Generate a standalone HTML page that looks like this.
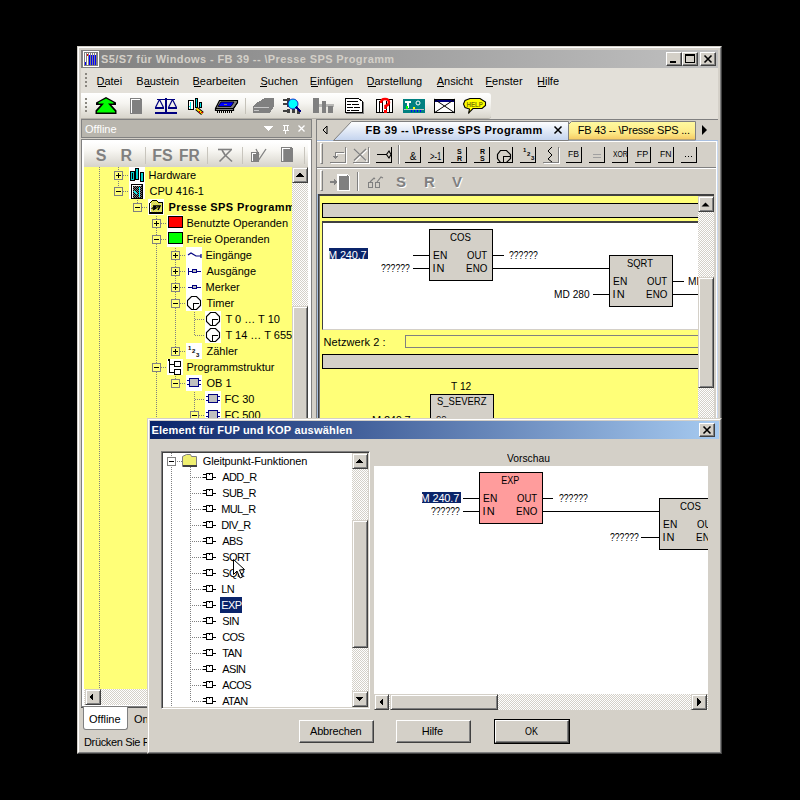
<!DOCTYPE html>
<html><head><meta charset="utf-8">
<style>
*{margin:0;padding:0;box-sizing:border-box}
html,body{width:800px;height:800px;background:#000;overflow:hidden;font-family:"Liberation Sans",sans-serif;font-size:11px;color:#000}
.a{position:absolute}
.t{position:absolute;white-space:nowrap;line-height:13px}
.btn3{position:absolute;background:#d4d0c8;border-top:1px solid #fff;border-left:1px solid #fff;border-right:1px solid #404040;border-bottom:1px solid #404040;box-shadow:inset -1px -1px 0 #808080}
.sbtn{position:absolute;background:#d4d0c8;border-top:1px solid #d4d0c8;border-left:1px solid #d4d0c8;border-right:1px solid #404040;border-bottom:1px solid #404040;box-shadow:inset 1px 1px 0 #fff,inset -1px -1px 0 #808080}
.sunk{position:absolute;border-top:1px solid #808080;border-left:1px solid #808080;border-right:1px solid #fff;border-bottom:1px solid #fff;box-shadow:inset 1px 1px 0 #404040, inset -1px -1px 0 #d4d0c8}
.chk{position:absolute;background:repeating-conic-gradient(#d4d0c8 0 25%,#fff 0 50%) 0 0/2px 2px}
</style></head><body>
<!-- ============ MAIN WINDOW ============ -->
<div class="a" style="left:77px;top:46px;width:645px;height:708px;background:#d4d0c8;border-top:1px solid #d4d0c8;border-left:1px solid #d4d0c8;border-right:1px solid #404040;border-bottom:1px solid #404040"></div>
<div class="a" style="left:78px;top:47px;width:643px;height:706px;border-top:1px solid #fff;border-left:1px solid #fff;border-right:1px solid #808080;border-bottom:1px solid #808080"></div>
<div class="a" style="left:81px;top:50px;width:637px;height:18px;background:linear-gradient(to right,#808080,#c0c0c0)"></div>
<div class="btn3" style="left:666px;top:52px;width:16px;height:14px"></div>
<div class="btn3" style="left:682px;top:52px;width:16px;height:14px"></div>
<div class="btn3" style="left:700px;top:52px;width:16px;height:14px"></div>
<div class="a" style="left:81px;top:68px;width:637px;height:51px;background:#e3e0d9"></div>
<div class="a" style="left:81px;top:93px;width:410px;height:25px;border-radius:0 3px 3px 0;background:linear-gradient(to bottom,#fff 0%,#f6f5f1 40%,#d8d5cc 100%);box-shadow:0 1px 0 #b5b2aa"></div>

<div class="t" style="left:101.00px;top:53px;font-weight:bold;color:#d4d0c8;letter-spacing:0.39px;">S5/S7 für Windows - FB 39 -- \Presse SPS Programm</div>
<div class="t" style="left:96.50px;top:75px;">Datei</div>
<div class="a" style="left:98px;top:86px;width:8px;height:1px;background:#000"></div>
<div class="t" style="left:136.30px;top:75px;">Baustein</div>
<div class="a" style="left:145px;top:86px;width:6px;height:1px;background:#000"></div>
<div class="t" style="left:192.50px;top:75px;">Bearbeiten</div>
<div class="a" style="left:194px;top:86px;width:7px;height:1px;background:#000"></div>
<div class="t" style="left:260.50px;top:75px;">Suchen</div>
<div class="a" style="left:260px;top:86px;width:7px;height:1px;background:#000"></div>
<div class="t" style="left:309.80px;top:75px;">Einfügen</div>
<div class="a" style="left:311px;top:86px;width:7px;height:1px;background:#000"></div>
<div class="t" style="left:366.50px;top:75px;">Darstellung</div>
<div class="a" style="left:368px;top:86px;width:8px;height:1px;background:#000"></div>
<div class="t" style="left:436.70px;top:75px;">Ansicht</div>
<div class="a" style="left:437px;top:86px;width:7px;height:1px;background:#000"></div>
<div class="t" style="left:485.30px;top:75px;">Fenster</div>
<div class="a" style="left:486px;top:86px;width:7px;height:1px;background:#000"></div>
<div class="t" style="left:537.00px;top:75px;">Hilfe</div>
<div class="a" style="left:538px;top:86px;width:8px;height:1px;background:#000"></div>
<!-- ICONS LAYER 1 -->
<svg class="a" style="left:0;top:0" width="800" height="800" shape-rendering="crispEdges">
<!-- title icon -->
<rect x="83" y="51" width="16" height="16" fill="#fff"/>
<rect x="84" y="52" width="14" height="14" fill="#808080"/>
<rect x="85" y="53" width="1" height="12" fill="#fff"/><rect x="85" y="62" width="1" height="3" fill="#0000ff"/>
<rect x="87" y="53" width="1" height="12" fill="#fff"/><rect x="87" y="54" width="1" height="2" fill="#f00"/>
<rect x="89" y="55" width="1" height="10" fill="#00f"/><rect x="91" y="55" width="1" height="10" fill="#00f"/>
<rect x="93" y="55" width="1" height="10" fill="#00f"/><rect x="95" y="55" width="1" height="10" fill="#00f"/>
<rect x="89" y="53" width="1" height="2" fill="#fff"/><rect x="91" y="53" width="1" height="2" fill="#fff"/>
<rect x="93" y="53" width="1" height="2" fill="#fff"/><rect x="95" y="53" width="1" height="2" fill="#fff"/>
<!-- title buttons glyphs -->
<rect x="670" y="61" width="6" height="2" fill="#000"/>
<rect x="685" y="54" width="9" height="8" fill="none" stroke="#000" stroke-width="1" transform="translate(0.5,0.5)"/>
<rect x="685" y="54" width="9" height="2" fill="#000"/>
<path d="M704.5,55.5 L711.5,62.5 M711.5,55.5 L704.5,62.5" stroke="#000" stroke-width="1.6" shape-rendering="auto"/>
<!-- menu grip -->
<g fill="#8a8780"><rect x="85" y="73" width="2" height="2"/><rect x="85" y="77" width="2" height="2"/><rect x="85" y="81" width="2" height="2"/><rect x="85" y="85" width="2" height="2"/></g>
<!-- toolbar grip -->
<g fill="#8a8780"><rect x="85" y="98" width="2" height="2"/><rect x="85" y="102" width="2" height="2"/><rect x="85" y="106" width="2" height="2"/><rect x="85" y="110" width="2" height="2"/></g>
<!-- tb1 green arrow -->
<path d="M106,97 L116,102.5 L116,105 L111.5,105 L116.5,110.5 L116.5,114 L95.5,114 L95.5,110.5 L100.5,105 L96,105 L96,102.5 Z" fill="#000" shape-rendering="auto"/><path d="M106,98.5 L113.5,102.5 L113.5,103.5 L108,103.5 L115,111.5 L115,112.5 L97,112.5 L97,111.5 L104,103.5 L98.5,103.5 L98.5,102.5 Z" fill="#00ff00" shape-rendering="auto"/>
<!-- tb2 gray book -->
<rect x="130" y="98" width="12" height="16" fill="#808080"/>
<rect x="131" y="99" width="1" height="14" fill="#fff"/><rect x="131" y="99" width="9" height="1" fill="#fff"/><rect x="141" y="98" width="1" height="1" fill="#e8e6e0"/>
<!-- tb3 scales -->
<g fill="#000080">
<rect x="165" y="98" width="2" height="15"/><rect x="155" y="112" width="22" height="2"/>
<rect x="157" y="99" width="18" height="1"/>
<rect x="155" y="107" width="9" height="2"/><rect x="168" y="107" width="9" height="2"/>
</g>
<path d="M159.5,99.5 L155.5,107.5 M159.5,99.5 L163.5,107.5 M172.5,99.5 L168.5,107.5 M172.5,99.5 L176.5,107.5" stroke="#000080" stroke-width="1.2" shape-rendering="auto"/>
<!-- tb4 hardware -->
<rect x="188" y="100" width="6" height="10" fill="#000"/><rect x="189" y="101" width="4" height="8" fill="#fff"/><rect x="190" y="102" width="1" height="7" fill="#00e0e0"/><rect x="189" y="106" width="2" height="1" fill="#00e0e0"/>
<rect x="195" y="98" width="3" height="10" fill="#000"/><rect x="196" y="99" width="1" height="8" fill="#00e0e0"/>
<rect x="199" y="102" width="3" height="6" fill="#000"/><rect x="200" y="103" width="1" height="4" fill="#00e0e0"/>
<path d="M196.5,108.5 L202.5,113.5" stroke="#000" stroke-width="4" shape-rendering="auto"/>
<path d="M196.5,108.5 L202.5,113.5" stroke="#ffe000" stroke-width="2.2" shape-rendering="auto"/>
<rect x="199" y="111" width="1" height="2" fill="#e00000"/><rect x="201" y="112" width="2" height="1" fill="#e00000"/>
<!-- tb5 chip -->
<path d="M219.5,100.5 L237.5,100.5 L237.5,102.5 L233.5,108.5 L233.5,110.5 L215.5,110.5 L215.5,108.5 Z" fill="#808080" stroke="#000" stroke-width="1.2" shape-rendering="auto"/>
<path d="M215.5,108.5 L233.5,108.5 L237.5,102.5" fill="none" stroke="#000" stroke-width="1" shape-rendering="auto"/>
<path d="M221,102 L234,102 L231,106.5 L218,106.5 Z" fill="#0000ff" stroke="#000" stroke-width="0.8" shape-rendering="auto"/>
<rect x="224" y="104" width="3" height="1" fill="#808060"/>
<g fill="#000"><rect x="217" y="111" width="1" height="2"/><rect x="219" y="111" width="1" height="2"/><rect x="221" y="111" width="1" height="2"/><rect x="223" y="111" width="1" height="2"/><rect x="225" y="111" width="1" height="2"/><rect x="227" y="111" width="1" height="2"/><rect x="229" y="111" width="1" height="2"/><rect x="231" y="111" width="1" height="2"/></g>
<!-- sep -->
<rect x="245" y="98" width="1" height="16" fill="#c5c2b9"/>
<!-- tb7 gray printer -->
<path d="M258,102 L265,98 L274,98 L274,106 L270,113 L253,113 L253,106 Z" fill="#808080"/>
<rect x="254" y="107" width="15" height="1" fill="#c8c8c8"/><rect x="254" y="110" width="5" height="1" fill="#c8c8c8"/>
<!-- tb8 network -->
<g fill="#404040"><rect x="283" y="99" width="4" height="2"/><rect x="283" y="103" width="4" height="2"/><rect x="283" y="110" width="4" height="2"/><rect x="287" y="98" width="3" height="9"/><rect x="287" y="109" width="3" height="4"/><rect x="292" y="109" width="3" height="4"/><rect x="297" y="109" width="3" height="5"/></g>
<circle cx="293" cy="104" r="5" fill="#00ffff" stroke="#0000c0" stroke-width="0.8" shape-rendering="auto"/>
<path d="M296,107 L301,112" stroke="#000080" stroke-width="1.5"/>
<!-- tb9 gray blocks -->
<g fill="#808080"><rect x="313" y="98" width="6" height="15"/><rect x="322" y="101" width="4" height="12"/><rect x="328" y="106" width="5" height="7"/><rect x="313" y="104" width="21" height="3" opacity="0.5"/></g>
<!-- tb10 document -->
<path d="M345,98 L359,98 L363,101 L363,113 L345,113 Z" fill="#808080" transform="translate(1,1)"/>
<path d="M345,98 L358,98 L362,101 L362,112 L345,112 Z" fill="#fff" stroke="#000" stroke-width="1" transform="translate(0.5,0.5)"/>
<g fill="#000"><rect x="347" y="101" width="11" height="1"/><rect x="347" y="104" width="4" height="1"/><rect x="352" y="104" width="7" height="1"/><rect x="347" y="107" width="6" height="1"/><rect x="354" y="107" width="6" height="1"/><rect x="347" y="110" width="3" height="1"/><rect x="351" y="110" width="8" height="1"/></g>
<!-- tb11 red ? -->
<rect x="376.5" y="99.5" width="16" height="13" fill="#fff" stroke="#000" stroke-width="1"/>
<g fill="#000"><rect x="379" y="101" width="1" height="11"/><rect x="382" y="101" width="1" height="11"/><rect x="386" y="101" width="1" height="11"/><rect x="389" y="101" width="1" height="11"/></g>
<path d="M381,103 Q381,99 385,99 Q389,99 389,102.5 Q389,105 385.5,106 L385.5,109" fill="none" stroke="#f00" stroke-width="2.5" shape-rendering="auto"/>
<rect x="384" y="110" width="3" height="3" fill="#f00"/>
<!-- tb12 teal -->
<rect x="403" y="99" width="22" height="14" fill="#008080"/>
<g fill="#fff"><rect x="405" y="101" width="6" height="2"/><rect x="407" y="103" width="2" height="5"/><rect x="404" y="109" width="20" height="1" fill="#c0c0c0"/></g>
<rect x="406" y="106" width="2" height="3" fill="#00ff00"/><rect x="413" y="107" width="2" height="2" fill="#ffff00"/>
<circle cx="418" cy="103" r="2" fill="none" stroke="#fff" stroke-width="1" shape-rendering="auto"/>
<g fill="#0000ff"><rect x="411" y="110" width="1" height="2"/><rect x="414" y="110" width="1" height="2"/><rect x="417" y="110" width="1" height="2"/><rect x="420" y="110" width="1" height="2"/></g>
<!-- tb13 envelope -->
<rect x="434.5" y="99.5" width="20" height="13" fill="#fff" stroke="#000" stroke-width="1"/>
<rect x="435" y="100" width="19" height="2" fill="#000080"/>
<path d="M434,99 L455,113 M455,99 L434,113" stroke="#000" stroke-width="1" shape-rendering="auto"/>
<!-- tb14 HELP -->
<path d="M470,98.5 L480,98.5 L485.5,102 L485.5,105.5 L482,108.5 L473,108.5 L470.5,111 L468.5,113.5 L469.5,109 L465,107.5 L463.5,104 L465,100.5 Z" fill="#ffff00" stroke="#000" stroke-width="1.1" shape-rendering="auto"/>
<text x="466.5" y="107" font-family="Liberation Sans" font-size="7" font-weight="bold" fill="#808000" textLength="16.5" lengthAdjust="spacingAndGlyphs">HELP</text>
</svg>
<!-- ============ LEFT DOCK PANEL ============ -->
<div class="a" style="left:81px;top:119px;width:231px;height:19px;background:#b8b5ad;border:1px solid #808080;border-right:1px solid #808080"></div>
<div class="t" style="left:85.00px;top:123px;color:#fff;">Offline</div>
<div class="a" style="left:81px;top:139px;width:231px;height:568px;background:#fff;border:1px solid #808080"></div>
<div class="a" style="left:84px;top:142px;width:224px;height:25px;background:linear-gradient(to bottom,#fff 0%,#f7f6f2 35%,#d6d3ca 100%)"></div>
<div class="a" style="left:84px;top:167px;width:208px;height:522px;background:#ffff78"></div>
<div class="chk" style="left:292px;top:167px;width:16px;height:522px"></div>
<div class="sbtn" style="left:292px;top:167px;width:16px;height:16px"></div>
<div class="sbtn" style="left:292px;top:306px;width:16px;height:383px"></div>
<div class="chk" style="left:84px;top:689px;width:224px;height:16px"></div>
<div class="sbtn" style="left:85px;top:689px;width:16px;height:16px"></div>
<div class="a" style="left:81px;top:707px;width:66px;height:1px;background:#505050"></div>
<div class="a" style="left:83px;top:707px;width:45px;height:23px;background:#fff;border:1px solid #808080;border-top:none;border-radius:0 0 3px 3px"></div>
<div class="t" style="left:89.00px;top:713px;">Offline</div>
<div class="t" style="left:134.00px;top:713px;">Online</div>
<div class="t" style="left:84.00px;top:736px;letter-spacing:-0.35px;">Drücken Sie F1, um Hilfe zu erhalten.</div>
<svg class="a" style="left:0;top:0" width="800" height="800" shape-rendering="crispEdges">
<defs><clipPath id="tc"><rect x="84" y="167" width="208" height="522"/></clipPath><pattern id="dk" width="2" height="2" patternUnits="userSpaceOnUse"><rect width="2" height="2" fill="#000"/><rect width="1" height="1" fill="#808080"/><rect x="1" y="1" width="1" height="1" fill="#808080"/></pattern><pattern id="yl" width="2" height="2" patternUnits="userSpaceOnUse"><rect width="2" height="2" fill="#ffff00"/><rect width="1" height="1" fill="#c0c0c0"/><rect x="1" y="1" width="1" height="1" fill="#c0c0c0"/></pattern></defs>
<g clip-path="url(#tc)">
<rect x="99" y="167" width="1" height="1" fill="#808080"/>
<rect x="99" y="169" width="1" height="1" fill="#808080"/>
<rect x="99" y="171" width="1" height="1" fill="#808080"/>
<rect x="99" y="173" width="1" height="1" fill="#808080"/>
<rect x="99" y="175" width="1" height="1" fill="#808080"/>
<rect x="99" y="177" width="1" height="1" fill="#808080"/>
<rect x="99" y="179" width="1" height="1" fill="#808080"/>
<rect x="99" y="181" width="1" height="1" fill="#808080"/>
<rect x="99" y="183" width="1" height="1" fill="#808080"/>
<rect x="99" y="185" width="1" height="1" fill="#808080"/>
<rect x="99" y="187" width="1" height="1" fill="#808080"/>
<rect x="99" y="189" width="1" height="1" fill="#808080"/>
<rect x="99" y="191" width="1" height="1" fill="#808080"/>
<rect x="99" y="193" width="1" height="1" fill="#808080"/>
<rect x="99" y="195" width="1" height="1" fill="#808080"/>
<rect x="99" y="197" width="1" height="1" fill="#808080"/>
<rect x="99" y="199" width="1" height="1" fill="#808080"/>
<rect x="99" y="201" width="1" height="1" fill="#808080"/>
<rect x="99" y="203" width="1" height="1" fill="#808080"/>
<rect x="99" y="205" width="1" height="1" fill="#808080"/>
<rect x="99" y="207" width="1" height="1" fill="#808080"/>
<rect x="99" y="209" width="1" height="1" fill="#808080"/>
<rect x="99" y="211" width="1" height="1" fill="#808080"/>
<rect x="99" y="213" width="1" height="1" fill="#808080"/>
<rect x="99" y="215" width="1" height="1" fill="#808080"/>
<rect x="99" y="217" width="1" height="1" fill="#808080"/>
<rect x="99" y="219" width="1" height="1" fill="#808080"/>
<rect x="99" y="221" width="1" height="1" fill="#808080"/>
<rect x="99" y="223" width="1" height="1" fill="#808080"/>
<rect x="99" y="225" width="1" height="1" fill="#808080"/>
<rect x="99" y="227" width="1" height="1" fill="#808080"/>
<rect x="99" y="229" width="1" height="1" fill="#808080"/>
<rect x="99" y="231" width="1" height="1" fill="#808080"/>
<rect x="99" y="233" width="1" height="1" fill="#808080"/>
<rect x="99" y="235" width="1" height="1" fill="#808080"/>
<rect x="99" y="237" width="1" height="1" fill="#808080"/>
<rect x="99" y="239" width="1" height="1" fill="#808080"/>
<rect x="99" y="241" width="1" height="1" fill="#808080"/>
<rect x="99" y="243" width="1" height="1" fill="#808080"/>
<rect x="99" y="245" width="1" height="1" fill="#808080"/>
<rect x="99" y="247" width="1" height="1" fill="#808080"/>
<rect x="99" y="249" width="1" height="1" fill="#808080"/>
<rect x="99" y="251" width="1" height="1" fill="#808080"/>
<rect x="99" y="253" width="1" height="1" fill="#808080"/>
<rect x="99" y="255" width="1" height="1" fill="#808080"/>
<rect x="99" y="257" width="1" height="1" fill="#808080"/>
<rect x="99" y="259" width="1" height="1" fill="#808080"/>
<rect x="99" y="261" width="1" height="1" fill="#808080"/>
<rect x="99" y="263" width="1" height="1" fill="#808080"/>
<rect x="99" y="265" width="1" height="1" fill="#808080"/>
<rect x="99" y="267" width="1" height="1" fill="#808080"/>
<rect x="99" y="269" width="1" height="1" fill="#808080"/>
<rect x="99" y="271" width="1" height="1" fill="#808080"/>
<rect x="99" y="273" width="1" height="1" fill="#808080"/>
<rect x="99" y="275" width="1" height="1" fill="#808080"/>
<rect x="99" y="277" width="1" height="1" fill="#808080"/>
<rect x="99" y="279" width="1" height="1" fill="#808080"/>
<rect x="99" y="281" width="1" height="1" fill="#808080"/>
<rect x="99" y="283" width="1" height="1" fill="#808080"/>
<rect x="99" y="285" width="1" height="1" fill="#808080"/>
<rect x="99" y="287" width="1" height="1" fill="#808080"/>
<rect x="99" y="289" width="1" height="1" fill="#808080"/>
<rect x="99" y="291" width="1" height="1" fill="#808080"/>
<rect x="99" y="293" width="1" height="1" fill="#808080"/>
<rect x="99" y="295" width="1" height="1" fill="#808080"/>
<rect x="99" y="297" width="1" height="1" fill="#808080"/>
<rect x="99" y="299" width="1" height="1" fill="#808080"/>
<rect x="99" y="301" width="1" height="1" fill="#808080"/>
<rect x="99" y="303" width="1" height="1" fill="#808080"/>
<rect x="99" y="305" width="1" height="1" fill="#808080"/>
<rect x="99" y="307" width="1" height="1" fill="#808080"/>
<rect x="99" y="309" width="1" height="1" fill="#808080"/>
<rect x="99" y="311" width="1" height="1" fill="#808080"/>
<rect x="99" y="313" width="1" height="1" fill="#808080"/>
<rect x="99" y="315" width="1" height="1" fill="#808080"/>
<rect x="99" y="317" width="1" height="1" fill="#808080"/>
<rect x="99" y="319" width="1" height="1" fill="#808080"/>
<rect x="99" y="321" width="1" height="1" fill="#808080"/>
<rect x="99" y="323" width="1" height="1" fill="#808080"/>
<rect x="99" y="325" width="1" height="1" fill="#808080"/>
<rect x="99" y="327" width="1" height="1" fill="#808080"/>
<rect x="99" y="329" width="1" height="1" fill="#808080"/>
<rect x="99" y="331" width="1" height="1" fill="#808080"/>
<rect x="99" y="333" width="1" height="1" fill="#808080"/>
<rect x="99" y="335" width="1" height="1" fill="#808080"/>
<rect x="99" y="337" width="1" height="1" fill="#808080"/>
<rect x="99" y="339" width="1" height="1" fill="#808080"/>
<rect x="99" y="341" width="1" height="1" fill="#808080"/>
<rect x="99" y="343" width="1" height="1" fill="#808080"/>
<rect x="99" y="345" width="1" height="1" fill="#808080"/>
<rect x="99" y="347" width="1" height="1" fill="#808080"/>
<rect x="99" y="349" width="1" height="1" fill="#808080"/>
<rect x="99" y="351" width="1" height="1" fill="#808080"/>
<rect x="99" y="353" width="1" height="1" fill="#808080"/>
<rect x="99" y="355" width="1" height="1" fill="#808080"/>
<rect x="99" y="357" width="1" height="1" fill="#808080"/>
<rect x="99" y="359" width="1" height="1" fill="#808080"/>
<rect x="99" y="361" width="1" height="1" fill="#808080"/>
<rect x="99" y="363" width="1" height="1" fill="#808080"/>
<rect x="99" y="365" width="1" height="1" fill="#808080"/>
<rect x="99" y="367" width="1" height="1" fill="#808080"/>
<rect x="99" y="369" width="1" height="1" fill="#808080"/>
<rect x="99" y="371" width="1" height="1" fill="#808080"/>
<rect x="99" y="373" width="1" height="1" fill="#808080"/>
<rect x="99" y="375" width="1" height="1" fill="#808080"/>
<rect x="99" y="377" width="1" height="1" fill="#808080"/>
<rect x="99" y="379" width="1" height="1" fill="#808080"/>
<rect x="99" y="381" width="1" height="1" fill="#808080"/>
<rect x="99" y="383" width="1" height="1" fill="#808080"/>
<rect x="99" y="385" width="1" height="1" fill="#808080"/>
<rect x="99" y="387" width="1" height="1" fill="#808080"/>
<rect x="99" y="389" width="1" height="1" fill="#808080"/>
<rect x="99" y="391" width="1" height="1" fill="#808080"/>
<rect x="99" y="393" width="1" height="1" fill="#808080"/>
<rect x="99" y="395" width="1" height="1" fill="#808080"/>
<rect x="99" y="397" width="1" height="1" fill="#808080"/>
<rect x="99" y="399" width="1" height="1" fill="#808080"/>
<rect x="99" y="401" width="1" height="1" fill="#808080"/>
<rect x="99" y="403" width="1" height="1" fill="#808080"/>
<rect x="99" y="405" width="1" height="1" fill="#808080"/>
<rect x="99" y="407" width="1" height="1" fill="#808080"/>
<rect x="99" y="409" width="1" height="1" fill="#808080"/>
<rect x="99" y="411" width="1" height="1" fill="#808080"/>
<rect x="99" y="413" width="1" height="1" fill="#808080"/>
<rect x="99" y="415" width="1" height="1" fill="#808080"/>
<rect x="99" y="417" width="1" height="1" fill="#808080"/>
<rect x="99" y="419" width="1" height="1" fill="#808080"/>
<rect x="99" y="421" width="1" height="1" fill="#808080"/>
<rect x="99" y="423" width="1" height="1" fill="#808080"/>
<rect x="99" y="425" width="1" height="1" fill="#808080"/>
<rect x="99" y="427" width="1" height="1" fill="#808080"/>
<rect x="99" y="429" width="1" height="1" fill="#808080"/>
<rect x="99" y="431" width="1" height="1" fill="#808080"/>
<rect x="99" y="433" width="1" height="1" fill="#808080"/>
<rect x="99" y="435" width="1" height="1" fill="#808080"/>
<rect x="99" y="437" width="1" height="1" fill="#808080"/>
<rect x="99" y="439" width="1" height="1" fill="#808080"/>
<rect x="99" y="441" width="1" height="1" fill="#808080"/>
<rect x="99" y="443" width="1" height="1" fill="#808080"/>
<rect x="99" y="445" width="1" height="1" fill="#808080"/>
<rect x="99" y="447" width="1" height="1" fill="#808080"/>
<rect x="99" y="449" width="1" height="1" fill="#808080"/>
<rect x="99" y="451" width="1" height="1" fill="#808080"/>
<rect x="99" y="453" width="1" height="1" fill="#808080"/>
<rect x="99" y="455" width="1" height="1" fill="#808080"/>
<rect x="99" y="457" width="1" height="1" fill="#808080"/>
<rect x="99" y="459" width="1" height="1" fill="#808080"/>
<rect x="99" y="461" width="1" height="1" fill="#808080"/>
<rect x="99" y="463" width="1" height="1" fill="#808080"/>
<rect x="99" y="465" width="1" height="1" fill="#808080"/>
<rect x="99" y="467" width="1" height="1" fill="#808080"/>
<rect x="99" y="469" width="1" height="1" fill="#808080"/>
<rect x="99" y="471" width="1" height="1" fill="#808080"/>
<rect x="99" y="473" width="1" height="1" fill="#808080"/>
<rect x="99" y="475" width="1" height="1" fill="#808080"/>
<rect x="99" y="477" width="1" height="1" fill="#808080"/>
<rect x="99" y="479" width="1" height="1" fill="#808080"/>
<rect x="99" y="481" width="1" height="1" fill="#808080"/>
<rect x="99" y="483" width="1" height="1" fill="#808080"/>
<rect x="99" y="485" width="1" height="1" fill="#808080"/>
<rect x="99" y="487" width="1" height="1" fill="#808080"/>
<rect x="99" y="489" width="1" height="1" fill="#808080"/>
<rect x="99" y="491" width="1" height="1" fill="#808080"/>
<rect x="99" y="493" width="1" height="1" fill="#808080"/>
<rect x="99" y="495" width="1" height="1" fill="#808080"/>
<rect x="99" y="497" width="1" height="1" fill="#808080"/>
<rect x="99" y="499" width="1" height="1" fill="#808080"/>
<rect x="99" y="501" width="1" height="1" fill="#808080"/>
<rect x="99" y="503" width="1" height="1" fill="#808080"/>
<rect x="99" y="505" width="1" height="1" fill="#808080"/>
<rect x="99" y="507" width="1" height="1" fill="#808080"/>
<rect x="99" y="509" width="1" height="1" fill="#808080"/>
<rect x="99" y="511" width="1" height="1" fill="#808080"/>
<rect x="99" y="513" width="1" height="1" fill="#808080"/>
<rect x="99" y="515" width="1" height="1" fill="#808080"/>
<rect x="99" y="517" width="1" height="1" fill="#808080"/>
<rect x="99" y="519" width="1" height="1" fill="#808080"/>
<rect x="99" y="521" width="1" height="1" fill="#808080"/>
<rect x="99" y="523" width="1" height="1" fill="#808080"/>
<rect x="99" y="525" width="1" height="1" fill="#808080"/>
<rect x="99" y="527" width="1" height="1" fill="#808080"/>
<rect x="99" y="529" width="1" height="1" fill="#808080"/>
<rect x="99" y="531" width="1" height="1" fill="#808080"/>
<rect x="99" y="533" width="1" height="1" fill="#808080"/>
<rect x="99" y="535" width="1" height="1" fill="#808080"/>
<rect x="99" y="537" width="1" height="1" fill="#808080"/>
<rect x="99" y="539" width="1" height="1" fill="#808080"/>
<rect x="99" y="541" width="1" height="1" fill="#808080"/>
<rect x="99" y="543" width="1" height="1" fill="#808080"/>
<rect x="99" y="545" width="1" height="1" fill="#808080"/>
<rect x="99" y="547" width="1" height="1" fill="#808080"/>
<rect x="99" y="549" width="1" height="1" fill="#808080"/>
<rect x="99" y="551" width="1" height="1" fill="#808080"/>
<rect x="99" y="553" width="1" height="1" fill="#808080"/>
<rect x="99" y="555" width="1" height="1" fill="#808080"/>
<rect x="99" y="557" width="1" height="1" fill="#808080"/>
<rect x="99" y="559" width="1" height="1" fill="#808080"/>
<rect x="99" y="561" width="1" height="1" fill="#808080"/>
<rect x="99" y="563" width="1" height="1" fill="#808080"/>
<rect x="99" y="565" width="1" height="1" fill="#808080"/>
<rect x="99" y="567" width="1" height="1" fill="#808080"/>
<rect x="99" y="569" width="1" height="1" fill="#808080"/>
<rect x="99" y="571" width="1" height="1" fill="#808080"/>
<rect x="99" y="573" width="1" height="1" fill="#808080"/>
<rect x="99" y="575" width="1" height="1" fill="#808080"/>
<rect x="99" y="577" width="1" height="1" fill="#808080"/>
<rect x="99" y="579" width="1" height="1" fill="#808080"/>
<rect x="99" y="581" width="1" height="1" fill="#808080"/>
<rect x="99" y="583" width="1" height="1" fill="#808080"/>
<rect x="99" y="585" width="1" height="1" fill="#808080"/>
<rect x="99" y="587" width="1" height="1" fill="#808080"/>
<rect x="99" y="589" width="1" height="1" fill="#808080"/>
<rect x="99" y="591" width="1" height="1" fill="#808080"/>
<rect x="99" y="593" width="1" height="1" fill="#808080"/>
<rect x="99" y="595" width="1" height="1" fill="#808080"/>
<rect x="99" y="597" width="1" height="1" fill="#808080"/>
<rect x="99" y="599" width="1" height="1" fill="#808080"/>
<rect x="99" y="601" width="1" height="1" fill="#808080"/>
<rect x="99" y="603" width="1" height="1" fill="#808080"/>
<rect x="99" y="605" width="1" height="1" fill="#808080"/>
<rect x="99" y="607" width="1" height="1" fill="#808080"/>
<rect x="99" y="609" width="1" height="1" fill="#808080"/>
<rect x="99" y="611" width="1" height="1" fill="#808080"/>
<rect x="99" y="613" width="1" height="1" fill="#808080"/>
<rect x="99" y="615" width="1" height="1" fill="#808080"/>
<rect x="99" y="617" width="1" height="1" fill="#808080"/>
<rect x="99" y="619" width="1" height="1" fill="#808080"/>
<rect x="99" y="621" width="1" height="1" fill="#808080"/>
<rect x="99" y="623" width="1" height="1" fill="#808080"/>
<rect x="99" y="625" width="1" height="1" fill="#808080"/>
<rect x="99" y="627" width="1" height="1" fill="#808080"/>
<rect x="99" y="629" width="1" height="1" fill="#808080"/>
<rect x="99" y="631" width="1" height="1" fill="#808080"/>
<rect x="99" y="633" width="1" height="1" fill="#808080"/>
<rect x="99" y="635" width="1" height="1" fill="#808080"/>
<rect x="99" y="637" width="1" height="1" fill="#808080"/>
<rect x="99" y="639" width="1" height="1" fill="#808080"/>
<rect x="99" y="641" width="1" height="1" fill="#808080"/>
<rect x="99" y="643" width="1" height="1" fill="#808080"/>
<rect x="99" y="645" width="1" height="1" fill="#808080"/>
<rect x="99" y="647" width="1" height="1" fill="#808080"/>
<rect x="99" y="649" width="1" height="1" fill="#808080"/>
<rect x="99" y="651" width="1" height="1" fill="#808080"/>
<rect x="99" y="653" width="1" height="1" fill="#808080"/>
<rect x="99" y="655" width="1" height="1" fill="#808080"/>
<rect x="99" y="657" width="1" height="1" fill="#808080"/>
<rect x="99" y="659" width="1" height="1" fill="#808080"/>
<rect x="99" y="661" width="1" height="1" fill="#808080"/>
<rect x="99" y="663" width="1" height="1" fill="#808080"/>
<rect x="99" y="665" width="1" height="1" fill="#808080"/>
<rect x="99" y="667" width="1" height="1" fill="#808080"/>
<rect x="99" y="669" width="1" height="1" fill="#808080"/>
<rect x="99" y="671" width="1" height="1" fill="#808080"/>
<rect x="99" y="673" width="1" height="1" fill="#808080"/>
<rect x="99" y="675" width="1" height="1" fill="#808080"/>
<rect x="99" y="677" width="1" height="1" fill="#808080"/>
<rect x="99" y="679" width="1" height="1" fill="#808080"/>
<rect x="99" y="681" width="1" height="1" fill="#808080"/>
<rect x="99" y="683" width="1" height="1" fill="#808080"/>
<rect x="99" y="685" width="1" height="1" fill="#808080"/>
<rect x="99" y="687" width="1" height="1" fill="#808080"/>
<rect x="118" y="167" width="1" height="1" fill="#808080"/>
<rect x="118" y="169" width="1" height="1" fill="#808080"/>
<rect x="118" y="171" width="1" height="1" fill="#808080"/>
<rect x="118" y="173" width="1" height="1" fill="#808080"/>
<rect x="118" y="175" width="1" height="1" fill="#808080"/>
<rect x="118" y="177" width="1" height="1" fill="#808080"/>
<rect x="118" y="179" width="1" height="1" fill="#808080"/>
<rect x="118" y="181" width="1" height="1" fill="#808080"/>
<rect x="118" y="183" width="1" height="1" fill="#808080"/>
<rect x="118" y="185" width="1" height="1" fill="#808080"/>
<rect x="118" y="187" width="1" height="1" fill="#808080"/>
<rect x="118" y="189" width="1" height="1" fill="#808080"/>
<rect x="137" y="196" width="1" height="1" fill="#808080"/>
<rect x="137" y="198" width="1" height="1" fill="#808080"/>
<rect x="137" y="200" width="1" height="1" fill="#808080"/>
<rect x="137" y="202" width="1" height="1" fill="#808080"/>
<rect x="137" y="204" width="1" height="1" fill="#808080"/>
<rect x="137" y="206" width="1" height="1" fill="#808080"/>
<rect x="156" y="212" width="1" height="1" fill="#808080"/>
<rect x="156" y="214" width="1" height="1" fill="#808080"/>
<rect x="156" y="216" width="1" height="1" fill="#808080"/>
<rect x="156" y="218" width="1" height="1" fill="#808080"/>
<rect x="156" y="220" width="1" height="1" fill="#808080"/>
<rect x="156" y="222" width="1" height="1" fill="#808080"/>
<rect x="156" y="224" width="1" height="1" fill="#808080"/>
<rect x="156" y="226" width="1" height="1" fill="#808080"/>
<rect x="156" y="228" width="1" height="1" fill="#808080"/>
<rect x="156" y="230" width="1" height="1" fill="#808080"/>
<rect x="156" y="232" width="1" height="1" fill="#808080"/>
<rect x="156" y="234" width="1" height="1" fill="#808080"/>
<rect x="156" y="236" width="1" height="1" fill="#808080"/>
<rect x="156" y="238" width="1" height="1" fill="#808080"/>
<rect x="156" y="240" width="1" height="1" fill="#808080"/>
<rect x="156" y="242" width="1" height="1" fill="#808080"/>
<rect x="156" y="244" width="1" height="1" fill="#808080"/>
<rect x="156" y="246" width="1" height="1" fill="#808080"/>
<rect x="156" y="248" width="1" height="1" fill="#808080"/>
<rect x="156" y="250" width="1" height="1" fill="#808080"/>
<rect x="156" y="252" width="1" height="1" fill="#808080"/>
<rect x="156" y="254" width="1" height="1" fill="#808080"/>
<rect x="156" y="256" width="1" height="1" fill="#808080"/>
<rect x="156" y="258" width="1" height="1" fill="#808080"/>
<rect x="156" y="260" width="1" height="1" fill="#808080"/>
<rect x="156" y="262" width="1" height="1" fill="#808080"/>
<rect x="156" y="264" width="1" height="1" fill="#808080"/>
<rect x="156" y="266" width="1" height="1" fill="#808080"/>
<rect x="156" y="268" width="1" height="1" fill="#808080"/>
<rect x="156" y="270" width="1" height="1" fill="#808080"/>
<rect x="156" y="272" width="1" height="1" fill="#808080"/>
<rect x="156" y="274" width="1" height="1" fill="#808080"/>
<rect x="156" y="276" width="1" height="1" fill="#808080"/>
<rect x="156" y="278" width="1" height="1" fill="#808080"/>
<rect x="156" y="280" width="1" height="1" fill="#808080"/>
<rect x="156" y="282" width="1" height="1" fill="#808080"/>
<rect x="156" y="284" width="1" height="1" fill="#808080"/>
<rect x="156" y="286" width="1" height="1" fill="#808080"/>
<rect x="156" y="288" width="1" height="1" fill="#808080"/>
<rect x="156" y="290" width="1" height="1" fill="#808080"/>
<rect x="156" y="292" width="1" height="1" fill="#808080"/>
<rect x="156" y="294" width="1" height="1" fill="#808080"/>
<rect x="156" y="296" width="1" height="1" fill="#808080"/>
<rect x="156" y="298" width="1" height="1" fill="#808080"/>
<rect x="156" y="300" width="1" height="1" fill="#808080"/>
<rect x="156" y="302" width="1" height="1" fill="#808080"/>
<rect x="156" y="304" width="1" height="1" fill="#808080"/>
<rect x="156" y="306" width="1" height="1" fill="#808080"/>
<rect x="156" y="308" width="1" height="1" fill="#808080"/>
<rect x="156" y="310" width="1" height="1" fill="#808080"/>
<rect x="156" y="312" width="1" height="1" fill="#808080"/>
<rect x="156" y="314" width="1" height="1" fill="#808080"/>
<rect x="156" y="316" width="1" height="1" fill="#808080"/>
<rect x="156" y="318" width="1" height="1" fill="#808080"/>
<rect x="156" y="320" width="1" height="1" fill="#808080"/>
<rect x="156" y="322" width="1" height="1" fill="#808080"/>
<rect x="156" y="324" width="1" height="1" fill="#808080"/>
<rect x="156" y="326" width="1" height="1" fill="#808080"/>
<rect x="156" y="328" width="1" height="1" fill="#808080"/>
<rect x="156" y="330" width="1" height="1" fill="#808080"/>
<rect x="156" y="332" width="1" height="1" fill="#808080"/>
<rect x="156" y="334" width="1" height="1" fill="#808080"/>
<rect x="156" y="336" width="1" height="1" fill="#808080"/>
<rect x="156" y="338" width="1" height="1" fill="#808080"/>
<rect x="156" y="340" width="1" height="1" fill="#808080"/>
<rect x="156" y="342" width="1" height="1" fill="#808080"/>
<rect x="156" y="344" width="1" height="1" fill="#808080"/>
<rect x="156" y="346" width="1" height="1" fill="#808080"/>
<rect x="156" y="348" width="1" height="1" fill="#808080"/>
<rect x="156" y="350" width="1" height="1" fill="#808080"/>
<rect x="156" y="352" width="1" height="1" fill="#808080"/>
<rect x="156" y="354" width="1" height="1" fill="#808080"/>
<rect x="156" y="356" width="1" height="1" fill="#808080"/>
<rect x="156" y="358" width="1" height="1" fill="#808080"/>
<rect x="156" y="360" width="1" height="1" fill="#808080"/>
<rect x="156" y="362" width="1" height="1" fill="#808080"/>
<rect x="156" y="364" width="1" height="1" fill="#808080"/>
<rect x="156" y="366" width="1" height="1" fill="#808080"/>
<rect x="156" y="368" width="1" height="1" fill="#808080"/>
<rect x="156" y="370" width="1" height="1" fill="#808080"/>
<rect x="156" y="372" width="1" height="1" fill="#808080"/>
<rect x="156" y="374" width="1" height="1" fill="#808080"/>
<rect x="156" y="376" width="1" height="1" fill="#808080"/>
<rect x="156" y="378" width="1" height="1" fill="#808080"/>
<rect x="156" y="380" width="1" height="1" fill="#808080"/>
<rect x="156" y="382" width="1" height="1" fill="#808080"/>
<rect x="156" y="384" width="1" height="1" fill="#808080"/>
<rect x="156" y="386" width="1" height="1" fill="#808080"/>
<rect x="156" y="388" width="1" height="1" fill="#808080"/>
<rect x="156" y="390" width="1" height="1" fill="#808080"/>
<rect x="156" y="392" width="1" height="1" fill="#808080"/>
<rect x="156" y="394" width="1" height="1" fill="#808080"/>
<rect x="156" y="396" width="1" height="1" fill="#808080"/>
<rect x="156" y="398" width="1" height="1" fill="#808080"/>
<rect x="156" y="400" width="1" height="1" fill="#808080"/>
<rect x="156" y="402" width="1" height="1" fill="#808080"/>
<rect x="156" y="404" width="1" height="1" fill="#808080"/>
<rect x="156" y="406" width="1" height="1" fill="#808080"/>
<rect x="156" y="408" width="1" height="1" fill="#808080"/>
<rect x="156" y="410" width="1" height="1" fill="#808080"/>
<rect x="156" y="412" width="1" height="1" fill="#808080"/>
<rect x="156" y="414" width="1" height="1" fill="#808080"/>
<rect x="156" y="416" width="1" height="1" fill="#808080"/>
<rect x="156" y="418" width="1" height="1" fill="#808080"/>
<rect x="156" y="420" width="1" height="1" fill="#808080"/>
<rect x="156" y="422" width="1" height="1" fill="#808080"/>
<rect x="156" y="424" width="1" height="1" fill="#808080"/>
<rect x="156" y="426" width="1" height="1" fill="#808080"/>
<rect x="156" y="428" width="1" height="1" fill="#808080"/>
<rect x="156" y="430" width="1" height="1" fill="#808080"/>
<rect x="156" y="432" width="1" height="1" fill="#808080"/>
<rect x="156" y="434" width="1" height="1" fill="#808080"/>
<rect x="156" y="436" width="1" height="1" fill="#808080"/>
<rect x="156" y="438" width="1" height="1" fill="#808080"/>
<rect x="156" y="440" width="1" height="1" fill="#808080"/>
<rect x="156" y="442" width="1" height="1" fill="#808080"/>
<rect x="156" y="444" width="1" height="1" fill="#808080"/>
<rect x="156" y="446" width="1" height="1" fill="#808080"/>
<rect x="156" y="448" width="1" height="1" fill="#808080"/>
<rect x="156" y="450" width="1" height="1" fill="#808080"/>
<rect x="156" y="452" width="1" height="1" fill="#808080"/>
<rect x="156" y="454" width="1" height="1" fill="#808080"/>
<rect x="156" y="456" width="1" height="1" fill="#808080"/>
<rect x="156" y="458" width="1" height="1" fill="#808080"/>
<rect x="156" y="460" width="1" height="1" fill="#808080"/>
<rect x="156" y="462" width="1" height="1" fill="#808080"/>
<rect x="156" y="464" width="1" height="1" fill="#808080"/>
<rect x="156" y="466" width="1" height="1" fill="#808080"/>
<rect x="156" y="468" width="1" height="1" fill="#808080"/>
<rect x="156" y="470" width="1" height="1" fill="#808080"/>
<rect x="156" y="472" width="1" height="1" fill="#808080"/>
<rect x="156" y="474" width="1" height="1" fill="#808080"/>
<rect x="156" y="476" width="1" height="1" fill="#808080"/>
<rect x="156" y="478" width="1" height="1" fill="#808080"/>
<rect x="156" y="480" width="1" height="1" fill="#808080"/>
<rect x="156" y="482" width="1" height="1" fill="#808080"/>
<rect x="156" y="484" width="1" height="1" fill="#808080"/>
<rect x="156" y="486" width="1" height="1" fill="#808080"/>
<rect x="156" y="488" width="1" height="1" fill="#808080"/>
<rect x="156" y="490" width="1" height="1" fill="#808080"/>
<rect x="156" y="492" width="1" height="1" fill="#808080"/>
<rect x="156" y="494" width="1" height="1" fill="#808080"/>
<rect x="156" y="496" width="1" height="1" fill="#808080"/>
<rect x="156" y="498" width="1" height="1" fill="#808080"/>
<rect x="156" y="500" width="1" height="1" fill="#808080"/>
<rect x="156" y="502" width="1" height="1" fill="#808080"/>
<rect x="156" y="504" width="1" height="1" fill="#808080"/>
<rect x="156" y="506" width="1" height="1" fill="#808080"/>
<rect x="156" y="508" width="1" height="1" fill="#808080"/>
<rect x="156" y="510" width="1" height="1" fill="#808080"/>
<rect x="156" y="512" width="1" height="1" fill="#808080"/>
<rect x="156" y="514" width="1" height="1" fill="#808080"/>
<rect x="156" y="516" width="1" height="1" fill="#808080"/>
<rect x="156" y="518" width="1" height="1" fill="#808080"/>
<rect x="156" y="520" width="1" height="1" fill="#808080"/>
<rect x="156" y="522" width="1" height="1" fill="#808080"/>
<rect x="156" y="524" width="1" height="1" fill="#808080"/>
<rect x="156" y="526" width="1" height="1" fill="#808080"/>
<rect x="156" y="528" width="1" height="1" fill="#808080"/>
<rect x="156" y="530" width="1" height="1" fill="#808080"/>
<rect x="156" y="532" width="1" height="1" fill="#808080"/>
<rect x="156" y="534" width="1" height="1" fill="#808080"/>
<rect x="156" y="536" width="1" height="1" fill="#808080"/>
<rect x="156" y="538" width="1" height="1" fill="#808080"/>
<rect x="156" y="540" width="1" height="1" fill="#808080"/>
<rect x="156" y="542" width="1" height="1" fill="#808080"/>
<rect x="156" y="544" width="1" height="1" fill="#808080"/>
<rect x="156" y="546" width="1" height="1" fill="#808080"/>
<rect x="156" y="548" width="1" height="1" fill="#808080"/>
<rect x="156" y="550" width="1" height="1" fill="#808080"/>
<rect x="156" y="552" width="1" height="1" fill="#808080"/>
<rect x="156" y="554" width="1" height="1" fill="#808080"/>
<rect x="156" y="556" width="1" height="1" fill="#808080"/>
<rect x="156" y="558" width="1" height="1" fill="#808080"/>
<rect x="156" y="560" width="1" height="1" fill="#808080"/>
<rect x="156" y="562" width="1" height="1" fill="#808080"/>
<rect x="156" y="564" width="1" height="1" fill="#808080"/>
<rect x="156" y="566" width="1" height="1" fill="#808080"/>
<rect x="156" y="568" width="1" height="1" fill="#808080"/>
<rect x="156" y="570" width="1" height="1" fill="#808080"/>
<rect x="156" y="572" width="1" height="1" fill="#808080"/>
<rect x="156" y="574" width="1" height="1" fill="#808080"/>
<rect x="156" y="576" width="1" height="1" fill="#808080"/>
<rect x="156" y="578" width="1" height="1" fill="#808080"/>
<rect x="156" y="580" width="1" height="1" fill="#808080"/>
<rect x="156" y="582" width="1" height="1" fill="#808080"/>
<rect x="156" y="584" width="1" height="1" fill="#808080"/>
<rect x="156" y="586" width="1" height="1" fill="#808080"/>
<rect x="156" y="588" width="1" height="1" fill="#808080"/>
<rect x="156" y="590" width="1" height="1" fill="#808080"/>
<rect x="156" y="592" width="1" height="1" fill="#808080"/>
<rect x="156" y="594" width="1" height="1" fill="#808080"/>
<rect x="156" y="596" width="1" height="1" fill="#808080"/>
<rect x="156" y="598" width="1" height="1" fill="#808080"/>
<rect x="156" y="600" width="1" height="1" fill="#808080"/>
<rect x="156" y="602" width="1" height="1" fill="#808080"/>
<rect x="156" y="604" width="1" height="1" fill="#808080"/>
<rect x="156" y="606" width="1" height="1" fill="#808080"/>
<rect x="156" y="608" width="1" height="1" fill="#808080"/>
<rect x="156" y="610" width="1" height="1" fill="#808080"/>
<rect x="156" y="612" width="1" height="1" fill="#808080"/>
<rect x="156" y="614" width="1" height="1" fill="#808080"/>
<rect x="156" y="616" width="1" height="1" fill="#808080"/>
<rect x="156" y="618" width="1" height="1" fill="#808080"/>
<rect x="156" y="620" width="1" height="1" fill="#808080"/>
<rect x="156" y="622" width="1" height="1" fill="#808080"/>
<rect x="156" y="624" width="1" height="1" fill="#808080"/>
<rect x="156" y="626" width="1" height="1" fill="#808080"/>
<rect x="156" y="628" width="1" height="1" fill="#808080"/>
<rect x="156" y="630" width="1" height="1" fill="#808080"/>
<rect x="156" y="632" width="1" height="1" fill="#808080"/>
<rect x="156" y="634" width="1" height="1" fill="#808080"/>
<rect x="156" y="636" width="1" height="1" fill="#808080"/>
<rect x="156" y="638" width="1" height="1" fill="#808080"/>
<rect x="156" y="640" width="1" height="1" fill="#808080"/>
<rect x="156" y="642" width="1" height="1" fill="#808080"/>
<rect x="156" y="644" width="1" height="1" fill="#808080"/>
<rect x="156" y="646" width="1" height="1" fill="#808080"/>
<rect x="156" y="648" width="1" height="1" fill="#808080"/>
<rect x="156" y="650" width="1" height="1" fill="#808080"/>
<rect x="156" y="652" width="1" height="1" fill="#808080"/>
<rect x="156" y="654" width="1" height="1" fill="#808080"/>
<rect x="156" y="656" width="1" height="1" fill="#808080"/>
<rect x="156" y="658" width="1" height="1" fill="#808080"/>
<rect x="156" y="660" width="1" height="1" fill="#808080"/>
<rect x="156" y="662" width="1" height="1" fill="#808080"/>
<rect x="156" y="664" width="1" height="1" fill="#808080"/>
<rect x="156" y="666" width="1" height="1" fill="#808080"/>
<rect x="156" y="668" width="1" height="1" fill="#808080"/>
<rect x="156" y="670" width="1" height="1" fill="#808080"/>
<rect x="156" y="672" width="1" height="1" fill="#808080"/>
<rect x="156" y="674" width="1" height="1" fill="#808080"/>
<rect x="156" y="676" width="1" height="1" fill="#808080"/>
<rect x="156" y="678" width="1" height="1" fill="#808080"/>
<rect x="156" y="680" width="1" height="1" fill="#808080"/>
<rect x="156" y="682" width="1" height="1" fill="#808080"/>
<rect x="156" y="684" width="1" height="1" fill="#808080"/>
<rect x="156" y="686" width="1" height="1" fill="#808080"/>
<rect x="175" y="244" width="1" height="1" fill="#808080"/>
<rect x="175" y="246" width="1" height="1" fill="#808080"/>
<rect x="175" y="248" width="1" height="1" fill="#808080"/>
<rect x="175" y="250" width="1" height="1" fill="#808080"/>
<rect x="175" y="252" width="1" height="1" fill="#808080"/>
<rect x="175" y="254" width="1" height="1" fill="#808080"/>
<rect x="175" y="256" width="1" height="1" fill="#808080"/>
<rect x="175" y="258" width="1" height="1" fill="#808080"/>
<rect x="175" y="260" width="1" height="1" fill="#808080"/>
<rect x="175" y="262" width="1" height="1" fill="#808080"/>
<rect x="175" y="264" width="1" height="1" fill="#808080"/>
<rect x="175" y="266" width="1" height="1" fill="#808080"/>
<rect x="175" y="268" width="1" height="1" fill="#808080"/>
<rect x="175" y="270" width="1" height="1" fill="#808080"/>
<rect x="175" y="272" width="1" height="1" fill="#808080"/>
<rect x="175" y="274" width="1" height="1" fill="#808080"/>
<rect x="175" y="276" width="1" height="1" fill="#808080"/>
<rect x="175" y="278" width="1" height="1" fill="#808080"/>
<rect x="175" y="280" width="1" height="1" fill="#808080"/>
<rect x="175" y="282" width="1" height="1" fill="#808080"/>
<rect x="175" y="284" width="1" height="1" fill="#808080"/>
<rect x="175" y="286" width="1" height="1" fill="#808080"/>
<rect x="175" y="288" width="1" height="1" fill="#808080"/>
<rect x="175" y="290" width="1" height="1" fill="#808080"/>
<rect x="175" y="292" width="1" height="1" fill="#808080"/>
<rect x="175" y="294" width="1" height="1" fill="#808080"/>
<rect x="175" y="296" width="1" height="1" fill="#808080"/>
<rect x="175" y="298" width="1" height="1" fill="#808080"/>
<rect x="175" y="300" width="1" height="1" fill="#808080"/>
<rect x="175" y="302" width="1" height="1" fill="#808080"/>
<rect x="175" y="304" width="1" height="1" fill="#808080"/>
<rect x="175" y="306" width="1" height="1" fill="#808080"/>
<rect x="175" y="308" width="1" height="1" fill="#808080"/>
<rect x="175" y="310" width="1" height="1" fill="#808080"/>
<rect x="175" y="312" width="1" height="1" fill="#808080"/>
<rect x="175" y="314" width="1" height="1" fill="#808080"/>
<rect x="175" y="316" width="1" height="1" fill="#808080"/>
<rect x="175" y="318" width="1" height="1" fill="#808080"/>
<rect x="175" y="320" width="1" height="1" fill="#808080"/>
<rect x="175" y="322" width="1" height="1" fill="#808080"/>
<rect x="175" y="324" width="1" height="1" fill="#808080"/>
<rect x="175" y="326" width="1" height="1" fill="#808080"/>
<rect x="175" y="328" width="1" height="1" fill="#808080"/>
<rect x="175" y="330" width="1" height="1" fill="#808080"/>
<rect x="175" y="332" width="1" height="1" fill="#808080"/>
<rect x="175" y="334" width="1" height="1" fill="#808080"/>
<rect x="175" y="336" width="1" height="1" fill="#808080"/>
<rect x="175" y="338" width="1" height="1" fill="#808080"/>
<rect x="175" y="340" width="1" height="1" fill="#808080"/>
<rect x="175" y="342" width="1" height="1" fill="#808080"/>
<rect x="175" y="344" width="1" height="1" fill="#808080"/>
<rect x="175" y="346" width="1" height="1" fill="#808080"/>
<rect x="175" y="348" width="1" height="1" fill="#808080"/>
<rect x="175" y="350" width="1" height="1" fill="#808080"/>
<rect x="194" y="308" width="1" height="1" fill="#808080"/>
<rect x="194" y="310" width="1" height="1" fill="#808080"/>
<rect x="194" y="312" width="1" height="1" fill="#808080"/>
<rect x="194" y="314" width="1" height="1" fill="#808080"/>
<rect x="194" y="316" width="1" height="1" fill="#808080"/>
<rect x="194" y="318" width="1" height="1" fill="#808080"/>
<rect x="194" y="320" width="1" height="1" fill="#808080"/>
<rect x="194" y="322" width="1" height="1" fill="#808080"/>
<rect x="194" y="324" width="1" height="1" fill="#808080"/>
<rect x="194" y="326" width="1" height="1" fill="#808080"/>
<rect x="194" y="328" width="1" height="1" fill="#808080"/>
<rect x="194" y="330" width="1" height="1" fill="#808080"/>
<rect x="194" y="332" width="1" height="1" fill="#808080"/>
<rect x="194" y="334" width="1" height="1" fill="#808080"/>
<rect x="175" y="372" width="1" height="1" fill="#808080"/>
<rect x="175" y="374" width="1" height="1" fill="#808080"/>
<rect x="175" y="376" width="1" height="1" fill="#808080"/>
<rect x="175" y="378" width="1" height="1" fill="#808080"/>
<rect x="175" y="380" width="1" height="1" fill="#808080"/>
<rect x="175" y="382" width="1" height="1" fill="#808080"/>
<rect x="194" y="388" width="1" height="1" fill="#808080"/>
<rect x="194" y="390" width="1" height="1" fill="#808080"/>
<rect x="194" y="392" width="1" height="1" fill="#808080"/>
<rect x="194" y="394" width="1" height="1" fill="#808080"/>
<rect x="194" y="396" width="1" height="1" fill="#808080"/>
<rect x="194" y="398" width="1" height="1" fill="#808080"/>
<rect x="194" y="400" width="1" height="1" fill="#808080"/>
<rect x="194" y="402" width="1" height="1" fill="#808080"/>
<rect x="194" y="404" width="1" height="1" fill="#808080"/>
<rect x="194" y="406" width="1" height="1" fill="#808080"/>
<rect x="194" y="408" width="1" height="1" fill="#808080"/>
<rect x="194" y="410" width="1" height="1" fill="#808080"/>
<rect x="194" y="412" width="1" height="1" fill="#808080"/>
<rect x="194" y="414" width="1" height="1" fill="#808080"/>
<rect x="194" y="416" width="1" height="1" fill="#808080"/>
<rect x="194" y="418" width="1" height="1" fill="#808080"/>
<rect x="123" y="175" width="1" height="1" fill="#808080"/>
<rect x="125" y="175" width="1" height="1" fill="#808080"/>
<rect x="127" y="175" width="1" height="1" fill="#808080"/>
<rect x="114.5" y="171.5" width="8" height="8" fill="#ffff78" stroke="#808080" stroke-width="1"/>
<rect x="116" y="175" width="5" height="1" fill="#000"/>
<rect x="118" y="173" width="1" height="5" fill="#000"/>
<rect x="129" y="167" width="16" height="16" fill="#fff"/>
<rect x="130.5" y="171.5" width="4" height="9" fill="#00d0d0" stroke="#000"/>
<rect x="135.5" y="168.5" width="3" height="11" fill="#00d0d0" stroke="#000"/>
<rect x="140.5" y="172.5" width="3" height="9" fill="#00d0d0" stroke="#000"/>
<rect x="132" y="173" width="1" height="6" fill="#000"/>
<rect x="123" y="191" width="1" height="1" fill="#808080"/>
<rect x="125" y="191" width="1" height="1" fill="#808080"/>
<rect x="127" y="191" width="1" height="1" fill="#808080"/>
<rect x="114.5" y="187.5" width="8" height="8" fill="#ffff78" stroke="#808080" stroke-width="1"/>
<rect x="116" y="191" width="5" height="1" fill="#000"/>
<rect x="129" y="183" width="16" height="16" fill="#fff"/>
<rect x="131" y="184" width="12" height="15" fill="#000"/>
<rect x="132" y="185" width="10" height="13" fill="url(#dk)"/>
<rect x="132" y="185" width="9" height="1" fill="#fff"/><rect x="132" y="185" width="1" height="13" fill="#fff"/>
<rect x="139" y="187" width="1" height="10" fill="#00ffff"/>
<path d="M134,191 L137,194" stroke="#00ffff" stroke-width="1.2" shape-rendering="auto"/>
<rect x="142" y="207" width="1" height="1" fill="#808080"/>
<rect x="144" y="207" width="1" height="1" fill="#808080"/>
<rect x="146" y="207" width="1" height="1" fill="#808080"/>
<rect x="133.5" y="203.5" width="8" height="8" fill="#ffff78" stroke="#808080" stroke-width="1"/>
<rect x="135" y="207" width="5" height="1" fill="#000"/>
<rect x="148" y="199" width="16" height="16" fill="#fff"/>
<path d="M149,203 L152,200 L157,200 L158,202 L163,202 L163,214 L149,214 Z" fill="#000"/>
<path d="M150,203 L152,201 L157,201 L158,203 L162,203 L162,212 L150,212 Z" fill="url(#yl)"/>
<rect x="150" y="203" width="1" height="9" fill="#fff"/>
<path d="M153,206 L156,206 L153,208 L156,208 L153,210 M157,206 L160,206 L158,210" fill="none" stroke="#000" stroke-width="1.5" shape-rendering="auto"/>
<rect x="161" y="223" width="1" height="1" fill="#808080"/>
<rect x="163" y="223" width="1" height="1" fill="#808080"/>
<rect x="165" y="223" width="1" height="1" fill="#808080"/>
<rect x="152.5" y="219.5" width="8" height="8" fill="#ffff78" stroke="#808080" stroke-width="1"/>
<rect x="154" y="223" width="5" height="1" fill="#000"/>
<rect x="156" y="221" width="1" height="5" fill="#000"/>
<rect x="167" y="215" width="16" height="16" fill="#fff"/>
<rect x="168.5" y="216.5" width="14" height="11" fill="#ff0000" stroke="#000"/>
<rect x="161" y="239" width="1" height="1" fill="#808080"/>
<rect x="163" y="239" width="1" height="1" fill="#808080"/>
<rect x="165" y="239" width="1" height="1" fill="#808080"/>
<rect x="152.5" y="235.5" width="8" height="8" fill="#ffff78" stroke="#808080" stroke-width="1"/>
<rect x="154" y="239" width="5" height="1" fill="#000"/>
<rect x="167" y="231" width="16" height="16" fill="#fff"/>
<rect x="168.5" y="232.5" width="14" height="11" fill="#00ff00" stroke="#000"/>
<rect x="180" y="255" width="1" height="1" fill="#808080"/>
<rect x="182" y="255" width="1" height="1" fill="#808080"/>
<rect x="184" y="255" width="1" height="1" fill="#808080"/>
<rect x="171.5" y="251.5" width="8" height="8" fill="#ffff78" stroke="#808080" stroke-width="1"/>
<rect x="173" y="255" width="5" height="1" fill="#000"/>
<rect x="175" y="253" width="1" height="5" fill="#000"/>
<rect x="186" y="247" width="16" height="16" fill="#fff"/>
<path d="M188,255 L191,253 L196,256 L201,256 M201,254 L201,258" fill="none" stroke="#000080" stroke-width="1.2" shape-rendering="auto"/>
<rect x="180" y="271" width="1" height="1" fill="#808080"/>
<rect x="182" y="271" width="1" height="1" fill="#808080"/>
<rect x="184" y="271" width="1" height="1" fill="#808080"/>
<rect x="171.5" y="267.5" width="8" height="8" fill="#ffff78" stroke="#808080" stroke-width="1"/>
<rect x="173" y="271" width="5" height="1" fill="#000"/>
<rect x="175" y="269" width="1" height="5" fill="#000"/>
<rect x="186" y="263" width="16" height="16" fill="#fff"/>
<rect x="188" y="268" width="1" height="7" fill="#000080"/><rect x="188" y="271" width="13" height="1" fill="#000080"/>
<rect x="192.5" y="269.5" width="4" height="3" fill="#c0c0c0" stroke="#000080"/>
<rect x="180" y="287" width="1" height="1" fill="#808080"/>
<rect x="182" y="287" width="1" height="1" fill="#808080"/>
<rect x="184" y="287" width="1" height="1" fill="#808080"/>
<rect x="171.5" y="283.5" width="8" height="8" fill="#ffff78" stroke="#808080" stroke-width="1"/>
<rect x="173" y="287" width="5" height="1" fill="#000"/>
<rect x="175" y="285" width="1" height="5" fill="#000"/>
<rect x="186" y="279" width="16" height="16" fill="#fff"/>
<rect x="188" y="287" width="13" height="1" fill="#000080"/>
<rect x="192.5" y="285.5" width="4" height="3" fill="#c0c0c0" stroke="#000080"/>
<rect x="180" y="303" width="1" height="1" fill="#808080"/>
<rect x="182" y="303" width="1" height="1" fill="#808080"/>
<rect x="184" y="303" width="1" height="1" fill="#808080"/>
<rect x="171.5" y="299.5" width="8" height="8" fill="#ffff78" stroke="#808080" stroke-width="1"/>
<rect x="173" y="303" width="5" height="1" fill="#000"/>
<rect x="186" y="295" width="16" height="16" fill="#fff"/>
<path d="M191.5,296.5 L196.5,296.5 L200.5,300.5 L200.5,305.5 L196.5,309.5 L191.5,309.5 L187.5,305.5 L187.5,300.5 Z" fill="#fff" stroke="#000" stroke-width="1.1" shape-rendering="auto"/>
<path d="M193.5,309 L193.5,303.5 L199,303.5" fill="none" stroke="#000" stroke-width="1.1"/>
<rect x="195" y="319" width="1" height="1" fill="#808080"/>
<rect x="197" y="319" width="1" height="1" fill="#808080"/>
<rect x="199" y="319" width="1" height="1" fill="#808080"/>
<rect x="201" y="319" width="1" height="1" fill="#808080"/>
<rect x="203" y="319" width="1" height="1" fill="#808080"/>
<rect x="205" y="311" width="16" height="16" fill="#fff"/>
<path d="M210.5,312.5 L215.5,312.5 L219.5,316.5 L219.5,321.5 L215.5,325.5 L210.5,325.5 L206.5,321.5 L206.5,316.5 Z" fill="#fff" stroke="#000" stroke-width="1.1" shape-rendering="auto"/>
<path d="M212.5,325 L212.5,319.5 L218,319.5" fill="none" stroke="#000" stroke-width="1.1"/>
<rect x="195" y="335" width="1" height="1" fill="#808080"/>
<rect x="197" y="335" width="1" height="1" fill="#808080"/>
<rect x="199" y="335" width="1" height="1" fill="#808080"/>
<rect x="201" y="335" width="1" height="1" fill="#808080"/>
<rect x="203" y="335" width="1" height="1" fill="#808080"/>
<rect x="205" y="327" width="16" height="16" fill="#fff"/>
<path d="M210.5,328.5 L215.5,328.5 L219.5,332.5 L219.5,337.5 L215.5,341.5 L210.5,341.5 L206.5,337.5 L206.5,332.5 Z" fill="#fff" stroke="#000" stroke-width="1.1" shape-rendering="auto"/>
<path d="M212.5,341 L212.5,335.5 L218,335.5" fill="none" stroke="#000" stroke-width="1.1"/>
<rect x="180" y="351" width="1" height="1" fill="#808080"/>
<rect x="182" y="351" width="1" height="1" fill="#808080"/>
<rect x="184" y="351" width="1" height="1" fill="#808080"/>
<rect x="171.5" y="347.5" width="8" height="8" fill="#ffff78" stroke="#808080" stroke-width="1"/>
<rect x="173" y="351" width="5" height="1" fill="#000"/>
<rect x="175" y="349" width="1" height="5" fill="#000"/>
<rect x="186" y="343" width="16" height="16" fill="#fff"/>
<text x="188" y="350" font-family="Liberation Sans" font-size="6" font-weight="bold">1</text>
<text x="192" y="353" font-family="Liberation Sans" font-size="6" font-weight="bold">2</text>
<text x="196" y="357" font-family="Liberation Sans" font-size="6" font-weight="bold">3</text>
<rect x="161" y="367" width="1" height="1" fill="#808080"/>
<rect x="163" y="367" width="1" height="1" fill="#808080"/>
<rect x="165" y="367" width="1" height="1" fill="#808080"/>
<rect x="152.5" y="363.5" width="8" height="8" fill="#ffff78" stroke="#808080" stroke-width="1"/>
<rect x="154" y="367" width="5" height="1" fill="#000"/>
<rect x="167" y="359" width="16" height="16" fill="#fff"/>
<rect x="168" y="359" width="2" height="2" fill="#000"/>
<path d="M169.5,361 L169.5,372.5 L174,372.5 M169.5,364.5 L174,364.5" fill="none" stroke="#000"/>
<rect x="174.5" y="361.5" width="6" height="5" fill="#fff" stroke="#000"/>
<rect x="174.5" y="369.5" width="6" height="5" fill="#fff" stroke="#000"/>
<rect x="180" y="383" width="1" height="1" fill="#808080"/>
<rect x="182" y="383" width="1" height="1" fill="#808080"/>
<rect x="184" y="383" width="1" height="1" fill="#808080"/>
<rect x="171.5" y="379.5" width="8" height="8" fill="#ffff78" stroke="#808080" stroke-width="1"/>
<rect x="173" y="383" width="5" height="1" fill="#000"/>
<rect x="186" y="375" width="16" height="16" fill="#fff"/>
<rect x="189.5" y="378.5" width="9" height="8" fill="#c0c0c0" stroke="#000080" stroke-width="1.5"/>
<rect x="187" y="380" width="2" height="1" fill="#000080"/><rect x="187" y="384" width="2" height="1" fill="#000080"/>
<rect x="199" y="380" width="2" height="1" fill="#000080"/><rect x="199" y="384" width="2" height="1" fill="#000080"/>
<rect x="195" y="399" width="1" height="1" fill="#808080"/>
<rect x="197" y="399" width="1" height="1" fill="#808080"/>
<rect x="199" y="399" width="1" height="1" fill="#808080"/>
<rect x="201" y="399" width="1" height="1" fill="#808080"/>
<rect x="203" y="399" width="1" height="1" fill="#808080"/>
<rect x="205" y="391" width="16" height="16" fill="#fff"/>
<rect x="208.5" y="394.5" width="9" height="8" fill="#c0c0c0" stroke="#000080" stroke-width="1.5"/>
<rect x="206" y="396" width="2" height="1" fill="#000080"/><rect x="206" y="400" width="2" height="1" fill="#000080"/>
<rect x="218" y="396" width="2" height="1" fill="#000080"/><rect x="218" y="400" width="2" height="1" fill="#000080"/>
<rect x="199" y="415" width="1" height="1" fill="#808080"/>
<rect x="201" y="415" width="1" height="1" fill="#808080"/>
<rect x="203" y="415" width="1" height="1" fill="#808080"/>
<rect x="190.5" y="411.5" width="8" height="8" fill="#ffff78" stroke="#808080" stroke-width="1"/>
<rect x="192" y="415" width="5" height="1" fill="#000"/>
<rect x="205" y="407" width="16" height="16" fill="#fff"/>
<rect x="208.5" y="410.5" width="9" height="8" fill="#c0c0c0" stroke="#000080" stroke-width="1.5"/>
<rect x="206" y="412" width="2" height="1" fill="#000080"/><rect x="206" y="416" width="2" height="1" fill="#000080"/>
<rect x="218" y="412" width="2" height="1" fill="#000080"/><rect x="218" y="416" width="2" height="1" fill="#000080"/>
</g>
<g fill="#c8c5bd"><rect x="145" y="147" width="1" height="17"/><rect x="207" y="147" width="1" height="17"/><rect x="242" y="147" width="1" height="17"/><rect x="304" y="147" width="1" height="17"/></g>
<g shape-rendering="auto" stroke="#808080" stroke-width="1.6" fill="none"><path d="M218,149.5 L232,149.5"/><path d="M222,150 L225,155"/><path d="M231,150 L219.5,161.5"/><path d="M225,155 L232,161.5"/></g>
<rect x="251" y="152" width="8" height="10" fill="#808080"/><rect x="252" y="153" width="1" height="8" fill="#fff"/><rect x="252" y="153" width="4" height="1" fill="#fff"/>
<path d="M258,161 L266,149 M256,149 L259,155" stroke="#808080" stroke-width="1.3" fill="none" shape-rendering="auto"/>
<path d="M281,162 L281,147 L291,147 L293,149 L293,162 Z" fill="#808080"/><rect x="282" y="148" width="1" height="13" fill="#fff"/><rect x="282" y="148" width="8" height="1" fill="#fff"/><rect x="283" y="149" width="1" height="12" fill="#a0a0a0"/>
<path d="M263,126 L273,126 L268,131 Z" fill="#fff"/>
<g fill="#fff"><rect x="283" y="125" width="6" height="1"/><rect x="284" y="125" width="1" height="5"/><rect x="287" y="125" width="1" height="5"/><rect x="283" y="130" width="6" height="1"/><rect x="285" y="131" width="1" height="3"/></g>
<path d="M298.5,125.5 L304.5,131.5 M304.5,125.5 L298.5,131.5" stroke="#fff" stroke-width="1.3" shape-rendering="auto"/>
<path d="M296,176.5 L304,176.5 L300,172.5 Z" fill="#000"/>
<path d="M89,697 L93,693 L93,701 Z" fill="#000"/>
</svg>
<div class="t" style="left:95.70px;top:146px;font-size:16px;line-height:19px;font-weight:bold;color:#808080;">S</div>
<div class="t" style="left:120.50px;top:146px;font-size:16px;line-height:19px;font-weight:bold;color:#808080;">R</div>
<div class="t" style="left:152.30px;top:146px;font-size:16px;line-height:19px;font-weight:bold;color:#808080;">FS</div>
<div class="t" style="left:179.00px;top:146px;font-size:16px;line-height:19px;font-weight:bold;color:#808080;transform:scaleX(0.970);transform-origin:1px 0;">FR</div>
<div class="a" style="left:84px;top:167px;width:208px;height:522px;overflow:hidden">
<div class="t" style="left:64.50px;top:2px;">Hardware</div>
<div class="t" style="left:65.50px;top:18px;">CPU 416-1</div>
<div class="t" style="left:84.50px;top:34px;font-weight:bold;letter-spacing:0.39px;">Presse SPS Programm</div>
<div class="t" style="left:102.50px;top:50px;">Benutzte Operanden</div>
<div class="t" style="left:102.50px;top:66px;">Freie Operanden</div>
<div class="t" style="left:121.50px;top:82px;">Eingänge</div>
<div class="t" style="left:122.50px;top:98px;">Ausgänge</div>
<div class="t" style="left:121.50px;top:114px;">Merker</div>
<div class="t" style="left:122.50px;top:130px;">Timer</div>
<div class="t" style="left:141.50px;top:146px;">T 0 … T 10</div>
<div class="t" style="left:141.50px;top:162px;">T 14 … T 655</div>
<div class="t" style="left:122.50px;top:178px;">Zähler</div>
<div class="t" style="left:102.50px;top:194px;">Programmstruktur</div>
<div class="t" style="left:122.50px;top:210px;">OB 1</div>
<div class="t" style="left:140.50px;top:226px;">FC 30</div>
<div class="t" style="left:140.50px;top:242px;">FC 500</div>
</div>
<!-- ============ RIGHT MDI AREA ============ -->
<div class="a" style="left:316px;top:119px;width:402px;height:635px;background:#d4d0c8;border-left:1px solid #808080;border-top:1px solid #808080"></div>
<div class="a" style="left:317px;top:140px;width:401px;height:1px;background:#a9bfe0"></div>
<svg class="a" style="left:0;top:0" width="800" height="800">
<defs><linearGradient id="tabg" x1="0" y1="0" x2="0" y2="1"><stop offset="0" stop-color="#ffffff"/><stop offset="1" stop-color="#c3d3ee"/></linearGradient>
<linearGradient id="tabo" x1="0" y1="0" x2="0" y2="1"><stop offset="0" stop-color="#fffaa0"/><stop offset="0.6" stop-color="#fdea88"/><stop offset="1" stop-color="#f5c860"/></linearGradient></defs>
<path d="M333.5,140.5 L351.5,121.5 L568.5,121.5 L568.5,140.5 Z" fill="url(#tabg)" stroke="#808080" stroke-width="1"/>
<path d="M568.5,140 L568.5,124.5 L571.5,121.5 L695.5,121.5 L695.5,140 Z" fill="url(#tabo)" stroke="#808080" stroke-width="1"/>
<path d="M323,130 L327,126 L327,134 Z" fill="none" stroke="#000" stroke-width="1"/>
<path d="M702,125 L707,130 L702,135 Z" fill="#000"/>
<path d="M554.5,126.5 L561.5,133.5 M561.5,126.5 L554.5,133.5" stroke="#000" stroke-width="1.5"/>
</svg>
<div class="t" style="left:365.60px;top:124px;font-weight:bold;letter-spacing:0.39px;">FB 39 -- \Presse SPS Programm</div>
<div class="t" style="left:577.70px;top:124px;letter-spacing:-0.22px;">FB 43 -- \Presse SPS ...</div>
<div class="a" style="left:317px;top:141px;width:401px;height:1px;background:#fff"></div>
<div class="a" style="left:317px;top:167px;width:401px;height:1px;background:#808080"></div>
<div class="a" style="left:317px;top:168px;width:401px;height:1px;background:#fff"></div>
<div class="a" style="left:320px;top:143px;width:3px;height:21px;border-left:1px solid #fff;border-right:1px solid #808080;border-top:1px solid #fff;border-bottom:1px solid #808080"></div>
<div class="a" style="left:320px;top:170px;width:3px;height:21px;border-left:1px solid #fff;border-right:1px solid #808080;border-top:1px solid #fff;border-bottom:1px solid #808080"></div>
<svg class="a" style="left:0;top:0" width="800" height="800" shape-rendering="crispEdges">
<rect x="345" y="147" width="1" height="16" fill="#808080"/><rect x="330" y="162" width="16" height="1" fill="#808080"/>
<rect x="346" y="148" width="1" height="16" fill="#fff"/><rect x="331" y="163" width="16" height="1" fill="#fff"/>
<rect x="368" y="147" width="1" height="16" fill="#808080"/><rect x="353" y="162" width="16" height="1" fill="#808080"/>
<rect x="369" y="148" width="1" height="16" fill="#fff"/><rect x="354" y="163" width="16" height="1" fill="#fff"/>
<rect x="391" y="147" width="1" height="16" fill="#000"/><rect x="376" y="162" width="16" height="1" fill="#000"/>
<rect x="420" y="147" width="1" height="16" fill="#000"/><rect x="405" y="162" width="16" height="1" fill="#000"/>
<rect x="443" y="147" width="1" height="16" fill="#000"/><rect x="428" y="162" width="16" height="1" fill="#000"/>
<rect x="466" y="147" width="1" height="16" fill="#000"/><rect x="451" y="162" width="16" height="1" fill="#000"/>
<rect x="489" y="147" width="1" height="16" fill="#000"/><rect x="474" y="162" width="16" height="1" fill="#000"/>
<rect x="512" y="147" width="1" height="16" fill="#000"/><rect x="497" y="162" width="16" height="1" fill="#000"/>
<rect x="535" y="147" width="1" height="16" fill="#000"/><rect x="520" y="162" width="16" height="1" fill="#000"/>
<rect x="558" y="147" width="1" height="16" fill="#808080"/><rect x="543" y="162" width="16" height="1" fill="#808080"/>
<rect x="559" y="148" width="1" height="16" fill="#fff"/><rect x="544" y="163" width="16" height="1" fill="#fff"/>
<rect x="581" y="147" width="1" height="16" fill="#000"/><rect x="566" y="162" width="16" height="1" fill="#000"/>
<rect x="604" y="147" width="1" height="16" fill="#000"/><rect x="589" y="162" width="16" height="1" fill="#000"/>
<rect x="627" y="147" width="1" height="16" fill="#000"/><rect x="612" y="162" width="16" height="1" fill="#000"/>
<rect x="650" y="147" width="1" height="16" fill="#000"/><rect x="635" y="162" width="16" height="1" fill="#000"/>
<rect x="673" y="147" width="1" height="16" fill="#000"/><rect x="658" y="162" width="16" height="1" fill="#000"/>
<rect x="696" y="147" width="1" height="16" fill="#000"/><rect x="681" y="162" width="16" height="1" fill="#000"/>
<rect x="398" y="145" width="1" height="19" fill="#808080"/><rect x="399" y="145" width="1" height="19" fill="#fff"/>
<g transform="translate(1,1)" fill="none" stroke="#fff" stroke-width="1"><path d="M344,152.5 L335.5,152.5 L335.5,157"/><path d="M354,149 L366,160.5 M366,149 L354,160.5" stroke-width="1.3" shape-rendering="auto"/></g>
<path d="M344,152.5 L335.5,152.5 L335.5,157" fill="none" stroke="#808080" stroke-width="1"/><path d="M333,156 L338,156 L335.5,159 Z" fill="#808080"/>
<path d="M354,149 L366,160.5 M366,149 L354,160.5" stroke="#808080" stroke-width="1.3" shape-rendering="auto"/>
<rect x="377" y="154" width="9" height="1" fill="#000"/><path d="M389,151 L386.5,154.5 L389,158 L391,154.5 Z" fill="none" stroke="#000" stroke-width="1.1" shape-rendering="auto"/>
</svg>
<div class="t" style="left:409.75px;top:151px;font-size:10px;line-height:12px;">&amp;</div>
<div class="t" style="left:429.75px;top:151px;font-size:10px;line-height:12px;transform:scaleX(0.767);transform-origin:0px 0;">&gt;-1</div>
<div class="t" style="left:457.00px;top:148px;font-size:7px;line-height:8px;font-weight:bold;">S</div>
<div class="t" style="left:457.00px;top:155px;font-size:7px;line-height:8px;font-weight:bold;">R</div>
<div class="t" style="left:480.00px;top:148px;font-size:7px;line-height:8px;font-weight:bold;">R</div>
<div class="t" style="left:480.00px;top:155px;font-size:7px;line-height:8px;font-weight:bold;">S</div>
<div class="t" style="left:567.70px;top:149px;font-size:9px;line-height:11px;transform:scaleX(0.955);transform-origin:0px 0;">FB</div>
<div class="t" style="left:612.70px;top:149px;font-size:9px;line-height:11px;transform:scaleX(0.753);transform-origin:0px 0;">XOR</div>
<div class="t" style="left:636.70px;top:149px;font-size:9px;line-height:11px;">FP</div>
<div class="t" style="left:659.70px;top:149px;font-size:9px;line-height:11px;transform:scaleX(0.958);transform-origin:0px 0;">FN</div>
<svg class="a" style="left:0;top:0" width="800" height="800" shape-rendering="crispEdges"><g fill="#000"><rect x="685" y="156" width="1" height="1"/><rect x="688" y="156" width="1" height="1"/><rect x="691" y="156" width="1" height="1"/></g><path d="M500.5,150.5 L506.5,150.5 L510.5,154.5 L510.5,158.5 L506.5,162.5 L500.5,162.5 L497.5,158.5 L497.5,154.5 Z" fill="none" stroke="#000" stroke-width="1.2" shape-rendering="auto"/><path d="M503.5,162 L503.5,156.5 L510,156.5" fill="none" stroke="#000" stroke-width="1.2"/><path d="M552,147 L548,151 L552,155 L548,159 L552,162" fill="none" stroke="#000" stroke-width="1" shape-rendering="auto"/><rect x="593" y="154" width="8" height="1" fill="#a0a0a0"/><rect x="593" y="157" width="8" height="1" fill="#a0a0a0"/></svg>
<div class="t" style="left:523.00px;top:147px;font-size:6px;line-height:7px;font-weight:bold;">1</div>
<div class="t" style="left:527.00px;top:151px;font-size:6px;line-height:7px;font-weight:bold;">2</div>
<div class="t" style="left:531.00px;top:155px;font-size:6px;line-height:7px;font-weight:bold;">3</div>
<svg class="a" style="left:0;top:0" width="800" height="800" shape-rendering="crispEdges">
<path d="M337.5,174.5 L347.5,174.5 L349.5,176.5 L349.5,190.5 L337.5,190.5 Z" fill="#808080" stroke="#fff" stroke-width="1"/><rect x="338" y="175" width="1" height="15" fill="#fff"/><rect x="338" y="175" width="9" height="1" fill="#fff"/>
<rect x="330" y="181" width="5" height="2" fill="#808080"/><path d="M334,178 L337.5,182 L334,186 Z" fill="#808080"/>
<rect x="357" y="172" width="1" height="19" fill="#808080"/><rect x="358" y="172" width="1" height="19" fill="#fff"/>
<g fill="none" stroke="#808080" stroke-width="1.2"><rect x="368.5" y="182.5" width="4" height="5"/><rect x="375.5" y="182.5" width="4" height="5"/><path d="M370,182 L374,178 L375,179 M377,182 L381,177 L383,178" shape-rendering="auto"/></g>
</svg>
<div class="t" style="left:396px;top:173px;font-weight:bold;font-size:15px;line-height:17px;color:#808080;text-shadow:1px 1px 0 #fff">S</div>
<div class="t" style="left:424px;top:173px;font-weight:bold;font-size:15px;line-height:17px;color:#808080;text-shadow:1px 1px 0 #fff">R</div>
<div class="t" style="left:452px;top:173px;font-weight:bold;font-size:15px;line-height:17px;color:#808080;text-shadow:1px 1px 0 #fff">V</div>
<div class="a" style="left:318px;top:194px;width:400px;height:240px;background:#ffff78;border-top:2px solid #404040;border-left:1px solid #404040;box-shadow:inset 1px 0 0 #808080"></div>
<div class="a" style="left:317px;top:194px;width:1px;height:240px;background:#a9bfe0"></div>
<div class="chk" style="left:698px;top:196px;width:16px;height:240px"></div>
<div class="sbtn" style="left:698px;top:196px;width:16px;height:16px"></div>
<div class="sbtn" style="left:698px;top:277px;width:16px;height:111px"></div>
<div class="a" style="left:714px;top:194px;width:4px;height:240px;background:#d4d0c8"></div>
<div class="a" style="left:716px;top:141px;width:1px;height:280px;background:#fff"></div><div class="a" style="left:717px;top:141px;width:1px;height:280px;background:#c8d8f0"></div>
<svg class="a" style="left:0;top:0" width="800" height="800"><path d="M701.5,206.5 L709.5,206.5 L705.5,202.5 Z" fill="#000"/></svg>
<div class="a" style="left:322px;top:203px;width:376px;height:15px;background:#d4d0c8;border:1px solid #000;border-right:none"></div>
<div class="a" style="left:322px;top:221px;width:376px;height:109px;background:#fff;border-top:2px solid #404040;border-left:1px solid #404040;border-bottom:1px solid #d4d0c8"></div>
<svg class="a" style="left:0;top:0" width="800" height="800" shape-rendering="crispEdges">
<defs><clipPath id="ec"><rect x="318" y="196" width="380" height="240"/></clipPath></defs>
<g clip-path="url(#ec)">
<rect x="329" y="248" width="39" height="11" fill="#0a246a"/>
<rect x="429.5" y="229.5" width="63" height="51" fill="#d4d0c8" stroke="#000"/>
<rect x="413" y="255" width="16" height="1" fill="#000"/><rect x="413" y="268" width="16" height="1" fill="#000"/>
<rect x="493" y="255" width="11" height="1" fill="#000"/><rect x="493" y="268" width="116" height="1" fill="#000"/>
<rect x="609.5" y="255.5" width="63" height="51" fill="#d4d0c8" stroke="#000"/>
<rect x="593" y="294" width="16" height="1" fill="#000"/>
<rect x="673" y="281" width="11" height="1" fill="#000"/><rect x="673" y="294" width="30" height="1" fill="#000"/>
<rect x="405.5" y="335.5" width="300" height="12" fill="#ffff78" stroke="#808080"/>
<rect x="322.5" y="354.5" width="380" height="14" fill="#d4d0c8" stroke="#000"/>
<rect x="430.5" y="394.5" width="63" height="60" fill="#d4d0c8" stroke="#000"/>
</g></svg>
<div class="a" style="left:318px;top:196px;width:380px;height:222px;overflow:hidden">
<div class="t" style="left:10.00px;top:53px;color:#fff;letter-spacing:-0.17px;">M 240.7</div>
<div class="t" style="left:131.60px;top:35px;transform:scaleX(0.875);transform-origin:0px 0;">COS</div>
<div class="t" style="left:114.50px;top:53px;transform:scaleX(0.929);transform-origin:1px 0;">EN</div>
<div class="t" style="left:114.50px;top:66px;letter-spacing:1.00px;">IN</div>
<div class="t" style="left:149.00px;top:53px;transform:scaleX(0.870);transform-origin:0px 0;">OUT</div>
<div class="t" style="left:147.60px;top:66px;transform:scaleX(0.891);transform-origin:1px 0;">ENO</div>
<div class="t" style="left:190.75px;top:53px;transform:scaleX(0.784);transform-origin:0px 0;">??????</div>
<div class="t" style="left:63.25px;top:66px;transform:scaleX(0.784);transform-origin:0px 0;">??????</div>
<div class="t" style="left:308.60px;top:61px;transform:scaleX(0.852);transform-origin:0px 0;">SQRT</div>
<div class="t" style="left:294.60px;top:79px;transform:scaleX(0.929);transform-origin:1px 0;">EN</div>
<div class="t" style="left:294.60px;top:92px;letter-spacing:1.00px;">IN</div>
<div class="t" style="left:328.60px;top:79px;transform:scaleX(0.870);transform-origin:0px 0;">OUT</div>
<div class="t" style="left:327.60px;top:92px;transform:scaleX(0.891);transform-origin:1px 0;">ENO</div>
<div class="t" style="left:236.00px;top:92px;transform:scaleX(0.921);transform-origin:1px 0;">MD 280</div>
<div class="t" style="left:370.00px;top:79px;transform:scaleX(0.921);transform-origin:1px 0;">MD 280</div>
<div class="t" style="left:5.50px;top:140px;letter-spacing:0.09px;">Netzwerk 2 :</div>
<div class="t" style="left:133.00px;top:184px;transform:scaleX(0.927);transform-origin:0px 0;">T 12</div>
<div class="t" style="left:118.70px;top:199px;transform:scaleX(0.860);transform-origin:0px 0;">S_SEVERZ</div>
<div class="t" style="left:54.00px;top:218px;letter-spacing:-0.17px;">M 240.7</div>
<div class="t" style="left:118.00px;top:218px;transform:scaleX(0.714);transform-origin:0px 0;">SS</div>
</div>
<!-- ============ DIALOG ============ -->
<div class="a" style="left:147px;top:418px;width:575px;height:336px;background:#d4d0c8;border-top:1px solid #d4d0c8;border-left:1px solid #d4d0c8;border-right:1px solid #404040;border-bottom:1px solid #404040"></div>
<div class="a" style="left:148px;top:419px;width:573px;height:334px;border-top:1px solid #fff;border-left:1px solid #fff;border-right:1px solid #808080;border-bottom:1px solid #808080"></div>
<div class="a" style="left:150px;top:421px;width:569px;height:18px;background:linear-gradient(to right,#0a246a,#a6caf0)"></div>
<div class="t" style="left:151.50px;top:424px;font-weight:bold;color:#fff;letter-spacing:0.19px;">Element für FUP und KOP auswählen</div>
<div class="btn3" style="left:699px;top:423px;width:16px;height:14px"></div>
<div class="sunk" style="left:161px;top:451px;width:209px;height:258px;background:#fff"></div>
<div class="chk" style="left:352px;top:453px;width:16px;height:254px"></div>
<div class="sbtn" style="left:352px;top:453px;width:16px;height:16px"></div>
<div class="sbtn" style="left:352px;top:520px;width:16px;height:128px"></div>
<div class="sbtn" style="left:352px;top:691px;width:16px;height:16px"></div>
<div class="t" style="left:507.00px;top:452px;transform:scaleX(0.935);transform-origin:0px 0;">Vorschau</div>
<div class="a" style="left:374px;top:466px;width:334px;height:228px;background:#fff"></div>
<div class="chk" style="left:374px;top:694px;width:334px;height:16px"></div>
<div class="sbtn" style="left:374px;top:694px;width:15px;height:16px"></div>
<div class="sbtn" style="left:390px;top:694px;width:108px;height:16px"></div>
<div class="sbtn" style="left:691px;top:694px;width:16px;height:16px"></div>
<div class="btn3" style="left:299px;top:720px;width:75px;height:23px"></div>
<div class="t" style="left:310.00px;top:725px;letter-spacing:-0.19px;">Abbrechen</div>
<div class="btn3" style="left:396px;top:720px;width:75px;height:23px"></div>
<div class="t" style="left:421.70px;top:725px;letter-spacing:-0.17px;">Hilfe</div>
<div class="a" style="left:494px;top:719px;width:76px;height:25px;border:1px solid #000"></div>
<div class="btn3" style="left:495px;top:720px;width:74px;height:23px"></div>
<div class="t" style="left:525.30px;top:725px;transform:scaleX(0.812);transform-origin:0px 0;">OK</div>
<svg class="a" style="left:0;top:0" width="800" height="800" shape-rendering="crispEdges">
<path d="M703.5,426.5 L710.5,433.5 M710.5,426.5 L703.5,433.5" stroke="#000" stroke-width="1.6" shape-rendering="auto"/>
<path d="M355.5,463 L363.5,463 L359.5,459 Z" fill="#000"/>
<path d="M355.5,697 L363.5,697 L359.5,701 Z" fill="#000"/>
<path d="M379,702 L383,698 L383,706 Z" fill="#000"/>
<path d="M697,698 L701,702 L697,706 Z" fill="#000"/>
<defs><clipPath id="lc"><rect x="163" y="453" width="189" height="253"/></clipPath></defs><g clip-path="url(#lc)">
<rect x="171" y="453" width="1" height="1" fill="#808080"/>
<rect x="171" y="455" width="1" height="1" fill="#808080"/>
<rect x="171" y="467" width="1" height="1" fill="#808080"/>
<rect x="171" y="469" width="1" height="1" fill="#808080"/>
<rect x="171" y="471" width="1" height="1" fill="#808080"/>
<rect x="171" y="473" width="1" height="1" fill="#808080"/>
<rect x="171" y="475" width="1" height="1" fill="#808080"/>
<rect x="171" y="477" width="1" height="1" fill="#808080"/>
<rect x="171" y="479" width="1" height="1" fill="#808080"/>
<rect x="171" y="481" width="1" height="1" fill="#808080"/>
<rect x="171" y="483" width="1" height="1" fill="#808080"/>
<rect x="171" y="485" width="1" height="1" fill="#808080"/>
<rect x="171" y="487" width="1" height="1" fill="#808080"/>
<rect x="171" y="489" width="1" height="1" fill="#808080"/>
<rect x="171" y="491" width="1" height="1" fill="#808080"/>
<rect x="171" y="493" width="1" height="1" fill="#808080"/>
<rect x="171" y="495" width="1" height="1" fill="#808080"/>
<rect x="171" y="497" width="1" height="1" fill="#808080"/>
<rect x="171" y="499" width="1" height="1" fill="#808080"/>
<rect x="171" y="501" width="1" height="1" fill="#808080"/>
<rect x="171" y="503" width="1" height="1" fill="#808080"/>
<rect x="171" y="505" width="1" height="1" fill="#808080"/>
<rect x="171" y="507" width="1" height="1" fill="#808080"/>
<rect x="171" y="509" width="1" height="1" fill="#808080"/>
<rect x="171" y="511" width="1" height="1" fill="#808080"/>
<rect x="171" y="513" width="1" height="1" fill="#808080"/>
<rect x="171" y="515" width="1" height="1" fill="#808080"/>
<rect x="171" y="517" width="1" height="1" fill="#808080"/>
<rect x="171" y="519" width="1" height="1" fill="#808080"/>
<rect x="171" y="521" width="1" height="1" fill="#808080"/>
<rect x="171" y="523" width="1" height="1" fill="#808080"/>
<rect x="171" y="525" width="1" height="1" fill="#808080"/>
<rect x="171" y="527" width="1" height="1" fill="#808080"/>
<rect x="171" y="529" width="1" height="1" fill="#808080"/>
<rect x="171" y="531" width="1" height="1" fill="#808080"/>
<rect x="171" y="533" width="1" height="1" fill="#808080"/>
<rect x="171" y="535" width="1" height="1" fill="#808080"/>
<rect x="171" y="537" width="1" height="1" fill="#808080"/>
<rect x="171" y="539" width="1" height="1" fill="#808080"/>
<rect x="171" y="541" width="1" height="1" fill="#808080"/>
<rect x="171" y="543" width="1" height="1" fill="#808080"/>
<rect x="171" y="545" width="1" height="1" fill="#808080"/>
<rect x="171" y="547" width="1" height="1" fill="#808080"/>
<rect x="171" y="549" width="1" height="1" fill="#808080"/>
<rect x="171" y="551" width="1" height="1" fill="#808080"/>
<rect x="171" y="553" width="1" height="1" fill="#808080"/>
<rect x="171" y="555" width="1" height="1" fill="#808080"/>
<rect x="171" y="557" width="1" height="1" fill="#808080"/>
<rect x="171" y="559" width="1" height="1" fill="#808080"/>
<rect x="171" y="561" width="1" height="1" fill="#808080"/>
<rect x="171" y="563" width="1" height="1" fill="#808080"/>
<rect x="171" y="565" width="1" height="1" fill="#808080"/>
<rect x="171" y="567" width="1" height="1" fill="#808080"/>
<rect x="171" y="569" width="1" height="1" fill="#808080"/>
<rect x="171" y="571" width="1" height="1" fill="#808080"/>
<rect x="171" y="573" width="1" height="1" fill="#808080"/>
<rect x="171" y="575" width="1" height="1" fill="#808080"/>
<rect x="171" y="577" width="1" height="1" fill="#808080"/>
<rect x="171" y="579" width="1" height="1" fill="#808080"/>
<rect x="171" y="581" width="1" height="1" fill="#808080"/>
<rect x="171" y="583" width="1" height="1" fill="#808080"/>
<rect x="171" y="585" width="1" height="1" fill="#808080"/>
<rect x="171" y="587" width="1" height="1" fill="#808080"/>
<rect x="171" y="589" width="1" height="1" fill="#808080"/>
<rect x="171" y="591" width="1" height="1" fill="#808080"/>
<rect x="171" y="593" width="1" height="1" fill="#808080"/>
<rect x="171" y="595" width="1" height="1" fill="#808080"/>
<rect x="171" y="597" width="1" height="1" fill="#808080"/>
<rect x="171" y="599" width="1" height="1" fill="#808080"/>
<rect x="171" y="601" width="1" height="1" fill="#808080"/>
<rect x="171" y="603" width="1" height="1" fill="#808080"/>
<rect x="171" y="605" width="1" height="1" fill="#808080"/>
<rect x="171" y="607" width="1" height="1" fill="#808080"/>
<rect x="171" y="609" width="1" height="1" fill="#808080"/>
<rect x="171" y="611" width="1" height="1" fill="#808080"/>
<rect x="171" y="613" width="1" height="1" fill="#808080"/>
<rect x="171" y="615" width="1" height="1" fill="#808080"/>
<rect x="171" y="617" width="1" height="1" fill="#808080"/>
<rect x="171" y="619" width="1" height="1" fill="#808080"/>
<rect x="171" y="621" width="1" height="1" fill="#808080"/>
<rect x="171" y="623" width="1" height="1" fill="#808080"/>
<rect x="171" y="625" width="1" height="1" fill="#808080"/>
<rect x="171" y="627" width="1" height="1" fill="#808080"/>
<rect x="171" y="629" width="1" height="1" fill="#808080"/>
<rect x="171" y="631" width="1" height="1" fill="#808080"/>
<rect x="171" y="633" width="1" height="1" fill="#808080"/>
<rect x="171" y="635" width="1" height="1" fill="#808080"/>
<rect x="171" y="637" width="1" height="1" fill="#808080"/>
<rect x="171" y="639" width="1" height="1" fill="#808080"/>
<rect x="171" y="641" width="1" height="1" fill="#808080"/>
<rect x="171" y="643" width="1" height="1" fill="#808080"/>
<rect x="171" y="645" width="1" height="1" fill="#808080"/>
<rect x="171" y="647" width="1" height="1" fill="#808080"/>
<rect x="171" y="649" width="1" height="1" fill="#808080"/>
<rect x="171" y="651" width="1" height="1" fill="#808080"/>
<rect x="171" y="653" width="1" height="1" fill="#808080"/>
<rect x="171" y="655" width="1" height="1" fill="#808080"/>
<rect x="171" y="657" width="1" height="1" fill="#808080"/>
<rect x="171" y="659" width="1" height="1" fill="#808080"/>
<rect x="171" y="661" width="1" height="1" fill="#808080"/>
<rect x="171" y="663" width="1" height="1" fill="#808080"/>
<rect x="171" y="665" width="1" height="1" fill="#808080"/>
<rect x="171" y="667" width="1" height="1" fill="#808080"/>
<rect x="171" y="669" width="1" height="1" fill="#808080"/>
<rect x="171" y="671" width="1" height="1" fill="#808080"/>
<rect x="171" y="673" width="1" height="1" fill="#808080"/>
<rect x="171" y="675" width="1" height="1" fill="#808080"/>
<rect x="171" y="677" width="1" height="1" fill="#808080"/>
<rect x="171" y="679" width="1" height="1" fill="#808080"/>
<rect x="171" y="681" width="1" height="1" fill="#808080"/>
<rect x="171" y="683" width="1" height="1" fill="#808080"/>
<rect x="171" y="685" width="1" height="1" fill="#808080"/>
<rect x="171" y="687" width="1" height="1" fill="#808080"/>
<rect x="171" y="689" width="1" height="1" fill="#808080"/>
<rect x="171" y="691" width="1" height="1" fill="#808080"/>
<rect x="171" y="693" width="1" height="1" fill="#808080"/>
<rect x="171" y="695" width="1" height="1" fill="#808080"/>
<rect x="171" y="697" width="1" height="1" fill="#808080"/>
<rect x="171" y="699" width="1" height="1" fill="#808080"/>
<rect x="171" y="701" width="1" height="1" fill="#808080"/>
<rect x="171" y="703" width="1" height="1" fill="#808080"/>
<rect x="171" y="705" width="1" height="1" fill="#808080"/>
<rect x="190" y="467" width="1" height="1" fill="#808080"/>
<rect x="190" y="469" width="1" height="1" fill="#808080"/>
<rect x="190" y="471" width="1" height="1" fill="#808080"/>
<rect x="190" y="473" width="1" height="1" fill="#808080"/>
<rect x="190" y="475" width="1" height="1" fill="#808080"/>
<rect x="190" y="477" width="1" height="1" fill="#808080"/>
<rect x="190" y="479" width="1" height="1" fill="#808080"/>
<rect x="190" y="481" width="1" height="1" fill="#808080"/>
<rect x="190" y="483" width="1" height="1" fill="#808080"/>
<rect x="190" y="485" width="1" height="1" fill="#808080"/>
<rect x="190" y="487" width="1" height="1" fill="#808080"/>
<rect x="190" y="489" width="1" height="1" fill="#808080"/>
<rect x="190" y="491" width="1" height="1" fill="#808080"/>
<rect x="190" y="493" width="1" height="1" fill="#808080"/>
<rect x="190" y="495" width="1" height="1" fill="#808080"/>
<rect x="190" y="497" width="1" height="1" fill="#808080"/>
<rect x="190" y="499" width="1" height="1" fill="#808080"/>
<rect x="190" y="501" width="1" height="1" fill="#808080"/>
<rect x="190" y="503" width="1" height="1" fill="#808080"/>
<rect x="190" y="505" width="1" height="1" fill="#808080"/>
<rect x="190" y="507" width="1" height="1" fill="#808080"/>
<rect x="190" y="509" width="1" height="1" fill="#808080"/>
<rect x="190" y="511" width="1" height="1" fill="#808080"/>
<rect x="190" y="513" width="1" height="1" fill="#808080"/>
<rect x="190" y="515" width="1" height="1" fill="#808080"/>
<rect x="190" y="517" width="1" height="1" fill="#808080"/>
<rect x="190" y="519" width="1" height="1" fill="#808080"/>
<rect x="190" y="521" width="1" height="1" fill="#808080"/>
<rect x="190" y="523" width="1" height="1" fill="#808080"/>
<rect x="190" y="525" width="1" height="1" fill="#808080"/>
<rect x="190" y="527" width="1" height="1" fill="#808080"/>
<rect x="190" y="529" width="1" height="1" fill="#808080"/>
<rect x="190" y="531" width="1" height="1" fill="#808080"/>
<rect x="190" y="533" width="1" height="1" fill="#808080"/>
<rect x="190" y="535" width="1" height="1" fill="#808080"/>
<rect x="190" y="537" width="1" height="1" fill="#808080"/>
<rect x="190" y="539" width="1" height="1" fill="#808080"/>
<rect x="190" y="541" width="1" height="1" fill="#808080"/>
<rect x="190" y="543" width="1" height="1" fill="#808080"/>
<rect x="190" y="545" width="1" height="1" fill="#808080"/>
<rect x="190" y="547" width="1" height="1" fill="#808080"/>
<rect x="190" y="549" width="1" height="1" fill="#808080"/>
<rect x="190" y="551" width="1" height="1" fill="#808080"/>
<rect x="190" y="553" width="1" height="1" fill="#808080"/>
<rect x="190" y="555" width="1" height="1" fill="#808080"/>
<rect x="190" y="557" width="1" height="1" fill="#808080"/>
<rect x="190" y="559" width="1" height="1" fill="#808080"/>
<rect x="190" y="561" width="1" height="1" fill="#808080"/>
<rect x="190" y="563" width="1" height="1" fill="#808080"/>
<rect x="190" y="565" width="1" height="1" fill="#808080"/>
<rect x="190" y="567" width="1" height="1" fill="#808080"/>
<rect x="190" y="569" width="1" height="1" fill="#808080"/>
<rect x="190" y="571" width="1" height="1" fill="#808080"/>
<rect x="190" y="573" width="1" height="1" fill="#808080"/>
<rect x="190" y="575" width="1" height="1" fill="#808080"/>
<rect x="190" y="577" width="1" height="1" fill="#808080"/>
<rect x="190" y="579" width="1" height="1" fill="#808080"/>
<rect x="190" y="581" width="1" height="1" fill="#808080"/>
<rect x="190" y="583" width="1" height="1" fill="#808080"/>
<rect x="190" y="585" width="1" height="1" fill="#808080"/>
<rect x="190" y="587" width="1" height="1" fill="#808080"/>
<rect x="190" y="589" width="1" height="1" fill="#808080"/>
<rect x="190" y="591" width="1" height="1" fill="#808080"/>
<rect x="190" y="593" width="1" height="1" fill="#808080"/>
<rect x="190" y="595" width="1" height="1" fill="#808080"/>
<rect x="190" y="597" width="1" height="1" fill="#808080"/>
<rect x="190" y="599" width="1" height="1" fill="#808080"/>
<rect x="190" y="601" width="1" height="1" fill="#808080"/>
<rect x="190" y="603" width="1" height="1" fill="#808080"/>
<rect x="190" y="605" width="1" height="1" fill="#808080"/>
<rect x="190" y="607" width="1" height="1" fill="#808080"/>
<rect x="190" y="609" width="1" height="1" fill="#808080"/>
<rect x="190" y="611" width="1" height="1" fill="#808080"/>
<rect x="190" y="613" width="1" height="1" fill="#808080"/>
<rect x="190" y="615" width="1" height="1" fill="#808080"/>
<rect x="190" y="617" width="1" height="1" fill="#808080"/>
<rect x="190" y="619" width="1" height="1" fill="#808080"/>
<rect x="190" y="621" width="1" height="1" fill="#808080"/>
<rect x="190" y="623" width="1" height="1" fill="#808080"/>
<rect x="190" y="625" width="1" height="1" fill="#808080"/>
<rect x="190" y="627" width="1" height="1" fill="#808080"/>
<rect x="190" y="629" width="1" height="1" fill="#808080"/>
<rect x="190" y="631" width="1" height="1" fill="#808080"/>
<rect x="190" y="633" width="1" height="1" fill="#808080"/>
<rect x="190" y="635" width="1" height="1" fill="#808080"/>
<rect x="190" y="637" width="1" height="1" fill="#808080"/>
<rect x="190" y="639" width="1" height="1" fill="#808080"/>
<rect x="190" y="641" width="1" height="1" fill="#808080"/>
<rect x="190" y="643" width="1" height="1" fill="#808080"/>
<rect x="190" y="645" width="1" height="1" fill="#808080"/>
<rect x="190" y="647" width="1" height="1" fill="#808080"/>
<rect x="190" y="649" width="1" height="1" fill="#808080"/>
<rect x="190" y="651" width="1" height="1" fill="#808080"/>
<rect x="190" y="653" width="1" height="1" fill="#808080"/>
<rect x="190" y="655" width="1" height="1" fill="#808080"/>
<rect x="190" y="657" width="1" height="1" fill="#808080"/>
<rect x="190" y="659" width="1" height="1" fill="#808080"/>
<rect x="190" y="661" width="1" height="1" fill="#808080"/>
<rect x="190" y="663" width="1" height="1" fill="#808080"/>
<rect x="190" y="665" width="1" height="1" fill="#808080"/>
<rect x="190" y="667" width="1" height="1" fill="#808080"/>
<rect x="190" y="669" width="1" height="1" fill="#808080"/>
<rect x="190" y="671" width="1" height="1" fill="#808080"/>
<rect x="190" y="673" width="1" height="1" fill="#808080"/>
<rect x="190" y="675" width="1" height="1" fill="#808080"/>
<rect x="190" y="677" width="1" height="1" fill="#808080"/>
<rect x="190" y="679" width="1" height="1" fill="#808080"/>
<rect x="190" y="681" width="1" height="1" fill="#808080"/>
<rect x="190" y="683" width="1" height="1" fill="#808080"/>
<rect x="190" y="685" width="1" height="1" fill="#808080"/>
<rect x="190" y="687" width="1" height="1" fill="#808080"/>
<rect x="190" y="689" width="1" height="1" fill="#808080"/>
<rect x="190" y="691" width="1" height="1" fill="#808080"/>
<rect x="190" y="693" width="1" height="1" fill="#808080"/>
<rect x="190" y="695" width="1" height="1" fill="#808080"/>
<rect x="190" y="697" width="1" height="1" fill="#808080"/>
<rect x="190" y="699" width="1" height="1" fill="#808080"/>
<rect x="167.5" y="457.5" width="8" height="8" fill="#fff" stroke="#808080"/><rect x="169" y="461" width="5" height="1" fill="#000"/>
<rect x="177" y="461" width="1" height="1" fill="#808080"/>
<rect x="179" y="461" width="1" height="1" fill="#808080"/>
<rect x="181" y="461" width="1" height="1" fill="#808080"/>
<path d="M182.5,456.5 L186.5,454.5 L190.5,454.5 L191.5,456.5 L196.5,456.5 L196.5,466.5 L182.5,466.5 Z" fill="#f0f070" stroke="#808080" shape-rendering="auto"/>
<rect x="183" y="465" width="14" height="2" fill="#404040"/>
<rect x="192" y="477" width="1" height="1" fill="#808080"/>
<rect x="194" y="477" width="1" height="1" fill="#808080"/>
<rect x="196" y="477" width="1" height="1" fill="#808080"/>
<rect x="198" y="477" width="1" height="1" fill="#808080"/>
<rect x="200" y="477" width="1" height="1" fill="#808080"/>
<rect x="202" y="477" width="1" height="1" fill="#808080"/>
<rect x="203" y="474" width="3" height="1" fill="#000"/><rect x="203" y="477" width="3" height="1" fill="#000"/>
<rect x="206.5" y="473.5" width="6" height="6" fill="#fff" stroke="#000"/>
<rect x="209" y="474" width="1" height="1" fill="#000"/>
<rect x="213" y="477" width="3" height="1" fill="#000"/>
<rect x="192" y="493" width="1" height="1" fill="#808080"/>
<rect x="194" y="493" width="1" height="1" fill="#808080"/>
<rect x="196" y="493" width="1" height="1" fill="#808080"/>
<rect x="198" y="493" width="1" height="1" fill="#808080"/>
<rect x="200" y="493" width="1" height="1" fill="#808080"/>
<rect x="202" y="493" width="1" height="1" fill="#808080"/>
<rect x="203" y="490" width="3" height="1" fill="#000"/><rect x="203" y="493" width="3" height="1" fill="#000"/>
<rect x="206.5" y="489.5" width="6" height="6" fill="#fff" stroke="#000"/>
<rect x="209" y="490" width="1" height="1" fill="#000"/>
<rect x="213" y="493" width="3" height="1" fill="#000"/>
<rect x="192" y="509" width="1" height="1" fill="#808080"/>
<rect x="194" y="509" width="1" height="1" fill="#808080"/>
<rect x="196" y="509" width="1" height="1" fill="#808080"/>
<rect x="198" y="509" width="1" height="1" fill="#808080"/>
<rect x="200" y="509" width="1" height="1" fill="#808080"/>
<rect x="202" y="509" width="1" height="1" fill="#808080"/>
<rect x="203" y="506" width="3" height="1" fill="#000"/><rect x="203" y="509" width="3" height="1" fill="#000"/>
<rect x="206.5" y="505.5" width="6" height="6" fill="#fff" stroke="#000"/>
<rect x="209" y="506" width="1" height="1" fill="#000"/>
<rect x="213" y="509" width="3" height="1" fill="#000"/>
<rect x="192" y="525" width="1" height="1" fill="#808080"/>
<rect x="194" y="525" width="1" height="1" fill="#808080"/>
<rect x="196" y="525" width="1" height="1" fill="#808080"/>
<rect x="198" y="525" width="1" height="1" fill="#808080"/>
<rect x="200" y="525" width="1" height="1" fill="#808080"/>
<rect x="202" y="525" width="1" height="1" fill="#808080"/>
<rect x="203" y="522" width="3" height="1" fill="#000"/><rect x="203" y="525" width="3" height="1" fill="#000"/>
<rect x="206.5" y="521.5" width="6" height="6" fill="#fff" stroke="#000"/>
<rect x="209" y="522" width="1" height="1" fill="#000"/>
<rect x="213" y="525" width="3" height="1" fill="#000"/>
<rect x="192" y="541" width="1" height="1" fill="#808080"/>
<rect x="194" y="541" width="1" height="1" fill="#808080"/>
<rect x="196" y="541" width="1" height="1" fill="#808080"/>
<rect x="198" y="541" width="1" height="1" fill="#808080"/>
<rect x="200" y="541" width="1" height="1" fill="#808080"/>
<rect x="202" y="541" width="1" height="1" fill="#808080"/>
<rect x="203" y="538" width="3" height="1" fill="#000"/><rect x="203" y="541" width="3" height="1" fill="#000"/>
<rect x="206.5" y="537.5" width="6" height="6" fill="#fff" stroke="#000"/>
<rect x="209" y="538" width="1" height="1" fill="#000"/>
<rect x="213" y="541" width="3" height="1" fill="#000"/>
<rect x="192" y="557" width="1" height="1" fill="#808080"/>
<rect x="194" y="557" width="1" height="1" fill="#808080"/>
<rect x="196" y="557" width="1" height="1" fill="#808080"/>
<rect x="198" y="557" width="1" height="1" fill="#808080"/>
<rect x="200" y="557" width="1" height="1" fill="#808080"/>
<rect x="202" y="557" width="1" height="1" fill="#808080"/>
<rect x="203" y="554" width="3" height="1" fill="#000"/><rect x="203" y="557" width="3" height="1" fill="#000"/>
<rect x="206.5" y="553.5" width="6" height="6" fill="#fff" stroke="#000"/>
<rect x="209" y="554" width="1" height="1" fill="#000"/>
<rect x="213" y="557" width="3" height="1" fill="#000"/>
<rect x="192" y="573" width="1" height="1" fill="#808080"/>
<rect x="194" y="573" width="1" height="1" fill="#808080"/>
<rect x="196" y="573" width="1" height="1" fill="#808080"/>
<rect x="198" y="573" width="1" height="1" fill="#808080"/>
<rect x="200" y="573" width="1" height="1" fill="#808080"/>
<rect x="202" y="573" width="1" height="1" fill="#808080"/>
<rect x="203" y="570" width="3" height="1" fill="#000"/><rect x="203" y="573" width="3" height="1" fill="#000"/>
<rect x="206.5" y="569.5" width="6" height="6" fill="#fff" stroke="#000"/>
<rect x="209" y="570" width="1" height="1" fill="#000"/>
<rect x="213" y="573" width="3" height="1" fill="#000"/>
<rect x="192" y="589" width="1" height="1" fill="#808080"/>
<rect x="194" y="589" width="1" height="1" fill="#808080"/>
<rect x="196" y="589" width="1" height="1" fill="#808080"/>
<rect x="198" y="589" width="1" height="1" fill="#808080"/>
<rect x="200" y="589" width="1" height="1" fill="#808080"/>
<rect x="202" y="589" width="1" height="1" fill="#808080"/>
<rect x="203" y="586" width="3" height="1" fill="#000"/><rect x="203" y="589" width="3" height="1" fill="#000"/>
<rect x="206.5" y="585.5" width="6" height="6" fill="#fff" stroke="#000"/>
<rect x="209" y="586" width="1" height="1" fill="#000"/>
<rect x="213" y="589" width="3" height="1" fill="#000"/>
<rect x="192" y="605" width="1" height="1" fill="#808080"/>
<rect x="194" y="605" width="1" height="1" fill="#808080"/>
<rect x="196" y="605" width="1" height="1" fill="#808080"/>
<rect x="198" y="605" width="1" height="1" fill="#808080"/>
<rect x="200" y="605" width="1" height="1" fill="#808080"/>
<rect x="202" y="605" width="1" height="1" fill="#808080"/>
<rect x="203" y="602" width="3" height="1" fill="#000"/><rect x="203" y="605" width="3" height="1" fill="#000"/>
<rect x="206.5" y="601.5" width="6" height="6" fill="#fff" stroke="#000"/>
<rect x="209" y="602" width="1" height="1" fill="#000"/>
<rect x="213" y="605" width="3" height="1" fill="#000"/>
<rect x="220" y="597" width="22" height="16" fill="#0a246a"/>
<rect x="192" y="621" width="1" height="1" fill="#808080"/>
<rect x="194" y="621" width="1" height="1" fill="#808080"/>
<rect x="196" y="621" width="1" height="1" fill="#808080"/>
<rect x="198" y="621" width="1" height="1" fill="#808080"/>
<rect x="200" y="621" width="1" height="1" fill="#808080"/>
<rect x="202" y="621" width="1" height="1" fill="#808080"/>
<rect x="203" y="618" width="3" height="1" fill="#000"/><rect x="203" y="621" width="3" height="1" fill="#000"/>
<rect x="206.5" y="617.5" width="6" height="6" fill="#fff" stroke="#000"/>
<rect x="209" y="618" width="1" height="1" fill="#000"/>
<rect x="213" y="621" width="3" height="1" fill="#000"/>
<rect x="192" y="637" width="1" height="1" fill="#808080"/>
<rect x="194" y="637" width="1" height="1" fill="#808080"/>
<rect x="196" y="637" width="1" height="1" fill="#808080"/>
<rect x="198" y="637" width="1" height="1" fill="#808080"/>
<rect x="200" y="637" width="1" height="1" fill="#808080"/>
<rect x="202" y="637" width="1" height="1" fill="#808080"/>
<rect x="203" y="634" width="3" height="1" fill="#000"/><rect x="203" y="637" width="3" height="1" fill="#000"/>
<rect x="206.5" y="633.5" width="6" height="6" fill="#fff" stroke="#000"/>
<rect x="209" y="634" width="1" height="1" fill="#000"/>
<rect x="213" y="637" width="3" height="1" fill="#000"/>
<rect x="192" y="653" width="1" height="1" fill="#808080"/>
<rect x="194" y="653" width="1" height="1" fill="#808080"/>
<rect x="196" y="653" width="1" height="1" fill="#808080"/>
<rect x="198" y="653" width="1" height="1" fill="#808080"/>
<rect x="200" y="653" width="1" height="1" fill="#808080"/>
<rect x="202" y="653" width="1" height="1" fill="#808080"/>
<rect x="203" y="650" width="3" height="1" fill="#000"/><rect x="203" y="653" width="3" height="1" fill="#000"/>
<rect x="206.5" y="649.5" width="6" height="6" fill="#fff" stroke="#000"/>
<rect x="209" y="650" width="1" height="1" fill="#000"/>
<rect x="213" y="653" width="3" height="1" fill="#000"/>
<rect x="192" y="669" width="1" height="1" fill="#808080"/>
<rect x="194" y="669" width="1" height="1" fill="#808080"/>
<rect x="196" y="669" width="1" height="1" fill="#808080"/>
<rect x="198" y="669" width="1" height="1" fill="#808080"/>
<rect x="200" y="669" width="1" height="1" fill="#808080"/>
<rect x="202" y="669" width="1" height="1" fill="#808080"/>
<rect x="203" y="666" width="3" height="1" fill="#000"/><rect x="203" y="669" width="3" height="1" fill="#000"/>
<rect x="206.5" y="665.5" width="6" height="6" fill="#fff" stroke="#000"/>
<rect x="209" y="666" width="1" height="1" fill="#000"/>
<rect x="213" y="669" width="3" height="1" fill="#000"/>
<rect x="192" y="685" width="1" height="1" fill="#808080"/>
<rect x="194" y="685" width="1" height="1" fill="#808080"/>
<rect x="196" y="685" width="1" height="1" fill="#808080"/>
<rect x="198" y="685" width="1" height="1" fill="#808080"/>
<rect x="200" y="685" width="1" height="1" fill="#808080"/>
<rect x="202" y="685" width="1" height="1" fill="#808080"/>
<rect x="203" y="682" width="3" height="1" fill="#000"/><rect x="203" y="685" width="3" height="1" fill="#000"/>
<rect x="206.5" y="681.5" width="6" height="6" fill="#fff" stroke="#000"/>
<rect x="209" y="682" width="1" height="1" fill="#000"/>
<rect x="213" y="685" width="3" height="1" fill="#000"/>
<rect x="192" y="701" width="1" height="1" fill="#808080"/>
<rect x="194" y="701" width="1" height="1" fill="#808080"/>
<rect x="196" y="701" width="1" height="1" fill="#808080"/>
<rect x="198" y="701" width="1" height="1" fill="#808080"/>
<rect x="200" y="701" width="1" height="1" fill="#808080"/>
<rect x="202" y="701" width="1" height="1" fill="#808080"/>
<rect x="203" y="698" width="3" height="1" fill="#000"/><rect x="203" y="701" width="3" height="1" fill="#000"/>
<rect x="206.5" y="697.5" width="6" height="6" fill="#fff" stroke="#000"/>
<rect x="209" y="698" width="1" height="1" fill="#000"/>
<rect x="213" y="701" width="3" height="1" fill="#000"/>
</g>
</svg>
<div class="t" style="left:202.75px;top:455px;letter-spacing:-0.15px;">Gleitpunkt-Funktionen</div>
<div class="t" style="left:222.20px;top:471px;letter-spacing:-0.60px;">ADD_R</div>
<div class="t" style="left:222.20px;top:487px;letter-spacing:-0.60px;">SUB_R</div>
<div class="t" style="left:221.20px;top:503px;letter-spacing:-0.60px;">MUL_R</div>
<div class="t" style="left:221.20px;top:519px;letter-spacing:-0.60px;">DIV_R</div>
<div class="t" style="left:222.20px;top:535px;letter-spacing:-0.60px;">ABS</div>
<div class="t" style="left:222.20px;top:551px;letter-spacing:-0.60px;">SQRT</div>
<div class="t" style="left:222.20px;top:567px;letter-spacing:-0.60px;">SQR</div>
<div class="t" style="left:221.20px;top:583px;letter-spacing:-0.60px;">LN</div>
<div class="t" style="left:221.20px;top:599px;color:#fff;letter-spacing:-0.60px;">EXP</div>
<div class="t" style="left:222.20px;top:615px;letter-spacing:-0.60px;">SIN</div>
<div class="t" style="left:222.20px;top:631px;letter-spacing:-0.60px;">COS</div>
<div class="t" style="left:222.20px;top:647px;letter-spacing:-0.60px;">TAN</div>
<div class="t" style="left:222.20px;top:663px;letter-spacing:-0.60px;">ASIN</div>
<div class="t" style="left:222.20px;top:679px;letter-spacing:-0.60px;">ACOS</div>
<div class="t" style="left:222.20px;top:695px;letter-spacing:-0.60px;">ATAN</div>
<svg class="a" style="left:0;top:0" width="800" height="800" shape-rendering="crispEdges">
<defs><clipPath id="pc"><rect x="374" y="466" width="334" height="228"/></clipPath></defs><g clip-path="url(#pc)">
<rect x="422" y="492" width="39" height="11" fill="#0a246a"/>
<rect x="479.5" y="472.5" width="63" height="51" fill="#ff9c9c" stroke="#000"/>
<rect x="463" y="498" width="16" height="1" fill="#000"/><rect x="463" y="511" width="16" height="1" fill="#000"/>
<rect x="543" y="498" width="10" height="1" fill="#000"/><rect x="543" y="511" width="117" height="1" fill="#000"/>
<rect x="659.5" y="498.5" width="63" height="51" fill="#d4d0c8" stroke="#000"/>
<rect x="641" y="537" width="18" height="1" fill="#000"/>
</g></svg>
<div class="a" style="left:374px;top:466px;width:334px;height:228px;overflow:hidden">
<div class="t" style="left:46.60px;top:26px;color:#fff;letter-spacing:-0.17px;">M 240.7</div>
<div class="t" style="left:126.60px;top:8px;transform:scaleX(0.824);transform-origin:1px 0;">EXP</div>
<div class="t" style="left:108.60px;top:26px;transform:scaleX(0.929);transform-origin:1px 0;">EN</div>
<div class="t" style="left:108.60px;top:39px;letter-spacing:1.00px;">IN</div>
<div class="t" style="left:142.70px;top:26px;transform:scaleX(0.870);transform-origin:0px 0;">OUT</div>
<div class="t" style="left:141.70px;top:39px;transform:scaleX(0.891);transform-origin:1px 0;">ENO</div>
<div class="t" style="left:185.00px;top:26px;transform:scaleX(0.784);transform-origin:0px 0;">??????</div>
<div class="t" style="left:56.60px;top:39px;transform:scaleX(0.784);transform-origin:0px 0;">??????</div>
<div class="t" style="left:306.00px;top:34px;transform:scaleX(0.875);transform-origin:0px 0;">COS</div>
<div class="t" style="left:288.50px;top:52px;transform:scaleX(0.929);transform-origin:1px 0;">EN</div>
<div class="t" style="left:288.50px;top:65px;letter-spacing:1.00px;">IN</div>
<div class="t" style="left:322.50px;top:52px;transform:scaleX(0.870);transform-origin:0px 0;">OUT</div>
<div class="t" style="left:321.50px;top:65px;transform:scaleX(0.891);transform-origin:1px 0;">ENO</div>
<div class="t" style="left:236.00px;top:65px;transform:scaleX(0.784);transform-origin:0px 0;">??????</div>
</div>
<svg class="a" style="left:0;top:0" width="800" height="800"><path d="M233.5,559.5 L233.5,574.5 L237,571 L240,578 L242.5,577 L239.5,570 L244.5,569.5 Z" fill="#fff" stroke="#000" stroke-width="1"/></svg>
</body></html>
